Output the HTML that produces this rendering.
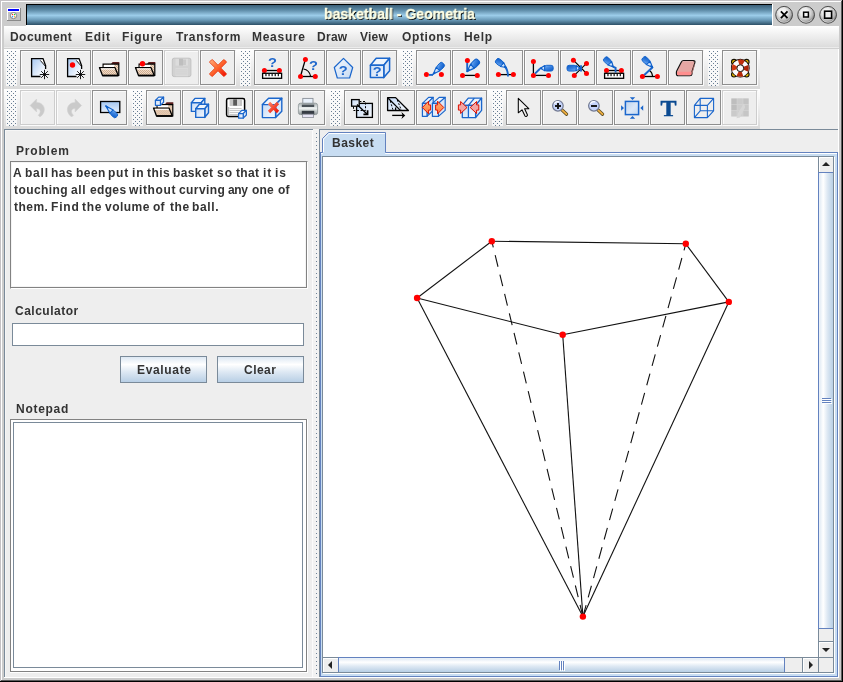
<!DOCTYPE html><html><head><meta charset="utf-8"><title>basketball - Geometria</title><style>
*{margin:0;padding:0;box-sizing:border-box}
html,body{width:843px;height:682px;overflow:hidden;background:#eeeeee}
body{position:relative;font-family:"Liberation Sans",sans-serif;font-weight:bold;font-size:12px;color:#333}
.a{position:absolute}
.t{position:absolute;margin-top:1px;will-change:transform;white-space:nowrap;line-height:15px;height:15px;color:#333}
.btn{position:absolute;width:36px;height:36px;will-change:transform}
.btn svg{position:absolute;left:0;top:0}
.grip{position:absolute;width:12px;height:36px;background:#f8f8f8}
.pbtn{position:absolute;height:27px;width:87px;border:1px solid #7a8a99;background:linear-gradient(#dde8f3 0%,#ffffff 30%,#dde8f3 60%,#b8cfe5 100%)}
</style></head><body><svg width="0" height="0" style="position:absolute"><defs><linearGradient id="gPen" x1="0" y1="0" x2="0.6" y2="1"><stop offset="0" stop-color="#7db6f6"/><stop offset="0.5" stop-color="#3a82e0"/><stop offset="1" stop-color="#1462cc"/></linearGradient><linearGradient id="gNib" x1="0" y1="0" x2="1" y2="1"><stop offset="0" stop-color="#ffffff"/><stop offset="0.5" stop-color="#d8eaff"/><stop offset="1" stop-color="#7ab2f4"/></linearGradient><linearGradient id="gLB" x1="0" y1="0" x2="1" y2="1"><stop offset="0" stop-color="#a4c6f0"/><stop offset="1" stop-color="#eef4fd"/></linearGradient><linearGradient id="gLBp" x1="0" y1="0" x2="1" y2="1"><stop offset="0" stop-color="#a6c8f2"/><stop offset="0.75" stop-color="#f2f7fe"/><stop offset="1" stop-color="#f4f4f4"/></linearGradient><linearGradient id="gLife" gradientUnits="userSpaceOnUse" x1="10" y1="10" x2="27" y2="27"><stop offset="0" stop-color="#e04016"/><stop offset="1" stop-color="#981a02"/></linearGradient><linearGradient id="gFit" x1="0" y1="0" x2="1" y2="1"><stop offset="0" stop-color="#bdd3ef"/><stop offset="0.55" stop-color="#dce8f7"/><stop offset="1" stop-color="#c2d7f2"/></linearGradient><linearGradient id="gLBc" x1="0" y1="0" x2="1" y2="1"><stop offset="0" stop-color="#c6daf5"/><stop offset="1" stop-color="#f7fafe"/></linearGradient><linearGradient id="gLB2" x1="0" y1="0" x2="1" y2="1"><stop offset="0" stop-color="#f2f7fd"/><stop offset="0.5" stop-color="#dde9f8"/><stop offset="1" stop-color="#c6daf3"/></linearGradient><linearGradient id="gLBv" x1="0" y1="0" x2="0" y2="1"><stop offset="0" stop-color="#a4c6f0"/><stop offset="1" stop-color="#e6f0fc"/></linearGradient><linearGradient id="gX" x1="0" y1="0" x2="1" y2="1"><stop offset="0" stop-color="#ffb080"/><stop offset="0.45" stop-color="#ff6a30"/><stop offset="1" stop-color="#f00800"/></linearGradient><linearGradient id="gX2" gradientUnits="userSpaceOnUse" x1="14" y1="12" x2="25" y2="23"><stop offset="0" stop-color="#ff8a6a"/><stop offset="1" stop-color="#e80a00"/></linearGradient><linearGradient id="gOr" x1="0" y1="0" x2="0" y2="1"><stop offset="0" stop-color="#ffb070"/><stop offset="1" stop-color="#ff7a40"/></linearGradient><linearGradient id="gPr" x1="0" y1="0" x2="0" y2="1"><stop offset="0" stop-color="#aab2b4"/><stop offset="0.45" stop-color="#eef2f2"/><stop offset="1" stop-color="#8e9698"/></linearGradient><pattern id="pChk" width="2" height="2" patternUnits="userSpaceOnUse"><rect width="2" height="2" fill="#f3dcc6"/><rect width="1" height="1" fill="#cfae93"/><rect x="1" y="1" width="1" height="1" fill="#cfae93"/></pattern></defs></svg>
<div class="a" style="left:0;top:0;width:843px;height:682px;background:#cccccc"></div>
<div class="a" style="left:0;top:0;width:843px;height:1px;background:#c4c1c4"></div>
<div class="a" style="left:0;top:0;width:1px;height:682px;background:#c4c1c4"></div>
<div class="a" style="left:1px;top:1px;width:841px;height:1px;background:#fff"></div>
<div class="a" style="left:1px;top:1px;width:1px;height:679px;background:#fff"></div>
<div class="a" style="left:839px;top:2px;width:2px;height:678px;background:#cbcbcb"></div>
<div class="a" style="left:2px;top:678px;width:839px;height:2px;background:#cbcbcb"></div>
<div class="a" style="left:841px;top:1px;width:1px;height:681px;background:#5c5c5c"></div>
<div class="a" style="left:1px;top:680px;width:841px;height:1px;background:#5c5c5c"></div>
<div class="a" style="left:842px;top:0;width:1px;height:682px;background:#000"></div>
<div class="a" style="left:0;top:681px;width:843px;height:1px;background:#000"></div>
<div class="a" style="left:4px;top:26px;width:835px;height:652px;background:#eeeeee"></div>
<div class="a" style="left:838px;top:26px;width:1px;height:652px;background:#fff"></div>
<div class="a" style="left:4px;top:677px;width:835px;height:1px;background:#fff"></div>
<div class="a" style="left:26px;top:4px;width:747px;height:22px;background:#fff"></div>
<div class="a" style="left:26px;top:4px;width:746px;height:21px;background:#000"></div>
<div class="a" style="left:27px;top:5px;width:745px;height:20px;background:linear-gradient(#3b5f78 0%,#5d8aa6 25%,#9ccdea 52%,#6a9ab8 75%,#2c4f66 100%)"></div>
<div class="t" id="title" style="left:324px;top:4px;font-size:15px;line-height:17px;height:17px;color:#ffffe4;text-shadow:1px 1px 0 #000;-webkit-text-stroke:0.35px #ffffe4;transform-origin:0 0;transform:scaleX(0.9384);">basketball - Geometria</div>
<svg class="a" style="left:7px;top:8px" width="14" height="13" viewBox="0 0 14 13"><rect x="0" y="0" width="14" height="13" fill="#8a8a8a"/><rect x="0" y="0" width="13" height="12" fill="#fff"/><rect x="1" y="4" width="12" height="8" fill="#c3c3c3"/><rect x="1" y="1" width="11" height="2" fill="#0000ff"/><rect x="12" y="1" width="1" height="3" fill="#fffff0"/><circle cx="6.5" cy="7.6" r="3.1" fill="#fdfdfd" stroke="#7a7a7a" stroke-width="0.9"/><rect x="5" y="6" width="1.2" height="1.2" fill="#ff3020"/><rect x="7" y="6" width="1.2" height="1.2" fill="#22cc22"/><rect x="5" y="8.1" width="1.2" height="1.2" fill="#2090ff"/><rect x="7" y="8.1" width="1.2" height="1.2" fill="#ffa020"/></svg>
<svg class="a" style="left:774px;top:5px" width="20" height="20" viewBox="0 0 20 20"><defs><radialGradient id="gx" cx="0.42" cy="0.36" r="0.62"><stop offset="0" stop-color="#ffffff"/><stop offset="0.4" stop-color="#ececec"/><stop offset="0.8" stop-color="#b4b4b4"/><stop offset="1" stop-color="#7c7c7c"/></radialGradient></defs><circle cx="10.1" cy="9.8" r="8.4" fill="url(#gx)" stroke="#4c4c4c" stroke-width="1"/><path d="M4.2 14.5 A7.6 7.6 0 0 0 16 14.5" fill="none" stroke="#e6e6e6" stroke-width="1" opacity="0.7"/><path d="M6.9 6.4 L13.5 13.2 M13.5 6.4 L6.9 13.2" stroke="#000" stroke-width="1.8" fill="none"/></svg>
<svg class="a" style="left:796px;top:5px" width="20" height="20" viewBox="0 0 20 20"><defs><radialGradient id="gm" cx="0.42" cy="0.36" r="0.62"><stop offset="0" stop-color="#ffffff"/><stop offset="0.4" stop-color="#ececec"/><stop offset="0.8" stop-color="#b4b4b4"/><stop offset="1" stop-color="#7c7c7c"/></radialGradient></defs><circle cx="10.1" cy="9.8" r="8.4" fill="url(#gm)" stroke="#4c4c4c" stroke-width="1"/><path d="M4.2 14.5 A7.6 7.6 0 0 0 16 14.5" fill="none" stroke="#e6e6e6" stroke-width="1" opacity="0.7"/><rect x="7.6" y="7.2" width="4.8" height="4.8" fill="#f4f4f4" stroke="#000" stroke-width="1.5"/></svg>
<svg class="a" style="left:818px;top:5px" width="20" height="20" viewBox="0 0 20 20"><defs><radialGradient id="gM" cx="0.42" cy="0.36" r="0.62"><stop offset="0" stop-color="#ffffff"/><stop offset="0.4" stop-color="#ececec"/><stop offset="0.8" stop-color="#b4b4b4"/><stop offset="1" stop-color="#7c7c7c"/></radialGradient></defs><circle cx="10.1" cy="9.8" r="8.4" fill="url(#gM)" stroke="#4c4c4c" stroke-width="1"/><path d="M4.2 14.5 A7.6 7.6 0 0 0 16 14.5" fill="none" stroke="#e6e6e6" stroke-width="1" opacity="0.7"/><rect x="6.6" y="6.2" width="7" height="7" fill="#ececec" stroke="#000" stroke-width="1.6"/></svg>
<div class="a" style="left:4px;top:26px;width:835px;height:21px;background:linear-gradient(#ffffff,#dcdcdc)"></div>
<div class="a" style="left:4px;top:47px;width:835px;height:1px;background:#ebebeb"></div>
<div class="a" style="left:4px;top:48px;width:835px;height:1px;background:#d0d0d0"></div>
<div class="t" style="left:9.80px;top:29px;letter-spacing:0.454px;">Document</div>
<div class="t" style="left:84.80px;top:29px;letter-spacing:0.759px;">Edit</div>
<div class="t" style="left:121.90px;top:29px;letter-spacing:0.768px;">Figure</div>
<div class="t" style="left:176.27px;top:29px;letter-spacing:0.724px;">Transform</div>
<div class="t" style="left:251.60px;top:29px;letter-spacing:0.718px;">Measure</div>
<div class="t" style="left:316.80px;top:29px;letter-spacing:0.279px;">Draw</div>
<div class="t" style="left:360.12px;top:29px;letter-spacing:0.239px;">View</div>
<div class="t" style="left:401.81px;top:29px;letter-spacing:0.609px;">Options</div>
<div class="t" style="left:463.80px;top:29px;letter-spacing:0.660px;">Help</div>
<div class="a" style="left:4px;top:49px;width:756px;height:40px;background:linear-gradient(#ffffff,#dadada)"></div>
<div class="a" style="left:4px;top:89px;width:756px;height:40px;background:linear-gradient(#ffffff,#dadada)"></div>
<svg class="a" style="left:6px;top:51px" width="11" height="35" viewBox="0 0 11 35"><rect width="11" height="35" fill="#fafafa" opacity="0.85"/><rect x="1" y="0" width="1" height="1" fill="#687d93"/><rect x="5" y="0" width="1" height="1" fill="#687d93"/><rect x="9" y="0" width="1" height="1" fill="#687d93"/><rect x="3" y="2" width="1" height="1" fill="#687d93"/><rect x="7" y="2" width="1" height="1" fill="#687d93"/><rect x="1" y="4" width="1" height="1" fill="#687d93"/><rect x="5" y="4" width="1" height="1" fill="#687d93"/><rect x="9" y="4" width="1" height="1" fill="#687d93"/><rect x="3" y="6" width="1" height="1" fill="#687d93"/><rect x="7" y="6" width="1" height="1" fill="#687d93"/><rect x="1" y="8" width="1" height="1" fill="#687d93"/><rect x="5" y="8" width="1" height="1" fill="#687d93"/><rect x="9" y="8" width="1" height="1" fill="#687d93"/><rect x="3" y="10" width="1" height="1" fill="#687d93"/><rect x="7" y="10" width="1" height="1" fill="#687d93"/><rect x="1" y="12" width="1" height="1" fill="#687d93"/><rect x="5" y="12" width="1" height="1" fill="#687d93"/><rect x="9" y="12" width="1" height="1" fill="#687d93"/><rect x="3" y="14" width="1" height="1" fill="#687d93"/><rect x="7" y="14" width="1" height="1" fill="#687d93"/><rect x="1" y="16" width="1" height="1" fill="#687d93"/><rect x="5" y="16" width="1" height="1" fill="#687d93"/><rect x="9" y="16" width="1" height="1" fill="#687d93"/><rect x="3" y="18" width="1" height="1" fill="#687d93"/><rect x="7" y="18" width="1" height="1" fill="#687d93"/><rect x="1" y="20" width="1" height="1" fill="#687d93"/><rect x="5" y="20" width="1" height="1" fill="#687d93"/><rect x="9" y="20" width="1" height="1" fill="#687d93"/><rect x="3" y="22" width="1" height="1" fill="#687d93"/><rect x="7" y="22" width="1" height="1" fill="#687d93"/><rect x="1" y="24" width="1" height="1" fill="#687d93"/><rect x="5" y="24" width="1" height="1" fill="#687d93"/><rect x="9" y="24" width="1" height="1" fill="#687d93"/><rect x="3" y="26" width="1" height="1" fill="#687d93"/><rect x="7" y="26" width="1" height="1" fill="#687d93"/><rect x="1" y="28" width="1" height="1" fill="#687d93"/><rect x="5" y="28" width="1" height="1" fill="#687d93"/><rect x="9" y="28" width="1" height="1" fill="#687d93"/><rect x="3" y="30" width="1" height="1" fill="#687d93"/><rect x="7" y="30" width="1" height="1" fill="#687d93"/><rect x="1" y="32" width="1" height="1" fill="#687d93"/><rect x="5" y="32" width="1" height="1" fill="#687d93"/><rect x="9" y="32" width="1" height="1" fill="#687d93"/><rect x="3" y="34" width="1" height="1" fill="#687d93"/><rect x="7" y="34" width="1" height="1" fill="#687d93"/></svg>
<div class="btn" style="left:20px;top:50px"><svg width="36" height="36" viewBox="0 0 36 36"><rect x="0" y="0" width="36" height="36" fill="#eeeeee"/><path d="M1.5 34 V1.5 H34 M35.5 1 V35.5 H1" fill="none" stroke="#fbfbfb" stroke-width="1"/><rect x="0.5" y="0.5" width="34" height="34" fill="none" stroke="#8e8e8e" stroke-width="1"/><path d="M11.6 8.6 L23 8.6 L25.6 15.5 L25.6 26.4 L11.6 26.4 Z" fill="url(#gLBp)"/><path d="M20.2 10.2 L23 8.6 L25.6 15.5 L25 16.3 Z" fill="#fff"/><path d="M20.5 26.5 L11.6 26.5 L11.6 8.6 L23 8.6 L25.6 15.5 L25.6 19" fill="none" stroke="#000" stroke-width="1.3"/><path d="M20.3 10.4 L25.2 16" fill="none" stroke="#000" stroke-width="0.9"/><rect x="17.5" y="19.5" width="11" height="10" fill="#eeeeee" opacity="0.0"/><path d="M24.5 19.8 L24.5 29.2 M19.8 24.5 L29.2 24.5 M21.2 21.2 L27.8 27.8 M27.8 21.2 L21.2 27.8" stroke="#000" stroke-width="0.9" fill="none"/></svg></div>
<div class="btn" style="left:56px;top:50px"><svg width="36" height="36" viewBox="0 0 36 36"><rect x="0" y="0" width="36" height="36" fill="#eeeeee"/><path d="M1.5 34 V1.5 H34 M35.5 1 V35.5 H1" fill="none" stroke="#fbfbfb" stroke-width="1"/><rect x="0.5" y="0.5" width="34" height="34" fill="none" stroke="#8e8e8e" stroke-width="1"/><path d="M11.6 8.6 L23 8.6 L25.6 15.5 L25.6 26.4 L11.6 26.4 Z" fill="url(#gLBp)"/><path d="M20.2 10.2 L23 8.6 L25.6 15.5 L25 16.3 Z" fill="#fff"/><path d="M20.5 26.5 L11.6 26.5 L11.6 8.6 L23 8.6 L25.6 15.5 L25.6 19" fill="none" stroke="#000" stroke-width="1.3"/><path d="M20.3 10.4 L25.2 16" fill="none" stroke="#000" stroke-width="0.9"/><rect x="17.5" y="19.5" width="11" height="10" fill="#eeeeee" opacity="0.0"/><path d="M24.5 19.8 L24.5 29.2 M19.8 24.5 L29.2 24.5 M21.2 21.2 L27.8 27.8 M27.8 21.2 L21.2 27.8" stroke="#000" stroke-width="0.9" fill="none"/><circle cx="16.50" cy="15.00" r="2.70" fill="#ff0000"/></svg></div>
<div class="btn" style="left:92px;top:50px"><svg width="36" height="36" viewBox="0 0 36 36"><rect x="0" y="0" width="36" height="36" fill="#eeeeee"/><path d="M1.5 34 V1.5 H34 M35.5 1 V35.5 H1" fill="none" stroke="#fbfbfb" stroke-width="1"/><rect x="0.5" y="0.5" width="34" height="34" fill="none" stroke="#8e8e8e" stroke-width="1"/><g transform="translate(0 0.0)"><path d="M19 13.9 L20.6 11.9 L27.3 11.9 L27.3 13.9 Z" fill="#5c1f1f"/><path d="M11.1 14.2 L26.8 14.2 L26.8 25.5 L11.1 25.5 Z" fill="url(#pChk)" stroke="#000" stroke-width="1.2"/><rect x="11.8" y="14.9" width="10.4" height="2.3" fill="#fff"/><path d="M7.5 17.7 L23 17.7 L26.3 25.5 L10.5 25.5 Z" fill="url(#pChk)" stroke="#000" stroke-width="1.3" stroke-linejoin="round"/><path d="M10.4 25.6 L26.4 25.6" stroke="#000" stroke-width="1.5"/><path d="M8.9 18.9 L22.6 18.9" stroke="#fff" stroke-width="1.1"/></g></svg></div>
<div class="btn" style="left:128px;top:50px"><svg width="36" height="36" viewBox="0 0 36 36"><rect x="0" y="0" width="36" height="36" fill="#eeeeee"/><path d="M1.5 34 V1.5 H34 M35.5 1 V35.5 H1" fill="none" stroke="#fbfbfb" stroke-width="1"/><rect x="0.5" y="0.5" width="34" height="34" fill="none" stroke="#8e8e8e" stroke-width="1"/><g transform="translate(0 0.0)"><path d="M19 13.9 L20.6 11.9 L27.3 11.9 L27.3 13.9 Z" fill="#5c1f1f"/><path d="M11.1 14.2 L26.8 14.2 L26.8 25.5 L11.1 25.5 Z" fill="url(#pChk)" stroke="#000" stroke-width="1.2"/><rect x="11.8" y="14.9" width="10.4" height="2.3" fill="#fff"/><path d="M7.5 17.7 L23 17.7 L26.3 25.5 L10.5 25.5 Z" fill="url(#pChk)" stroke="#000" stroke-width="1.3" stroke-linejoin="round"/><path d="M10.4 25.6 L26.4 25.6" stroke="#000" stroke-width="1.5"/><path d="M8.9 18.9 L22.6 18.9" stroke="#fff" stroke-width="1.1"/></g><circle cx="14.50" cy="13.80" r="2.70" fill="#ff0000"/></svg></div>
<div class="btn" style="left:164px;top:50px"><svg width="36" height="36" viewBox="0 0 36 36"><rect x="0" y="0" width="36" height="36" fill="#eeeeee"/><path d="M1.5 34 V1.5 H34 M35.5 1 V35.5 H1" fill="none" stroke="#fbfbfb" stroke-width="1"/><rect x="0.5" y="0.5" width="34" height="34" fill="none" stroke="#cdcdcd" stroke-width="1"/><rect x="8.3" y="8.2" width="18.6" height="18.4" rx="1.8" fill="#d2d2d2" stroke="#c2c2c2" stroke-width="1"/><rect x="11.5" y="8.8" width="12.5" height="6.8" fill="#dcdcdc"/><rect x="15" y="8.8" width="4" height="6.8" fill="#bebebe"/><rect x="19" y="9.5" width="3" height="5.5" fill="#cacaca"/><rect x="11.5" y="18" width="12.5" height="8.3" fill="#dadada"/><path d="M12 20 H23.5 M12 22 H23.5 M12 24 H23.5" stroke="#cfcfcf" stroke-width="0.8"/></svg></div>
<div class="btn" style="left:200px;top:50px"><svg width="36" height="36" viewBox="0 0 36 36"><rect x="0" y="0" width="36" height="36" fill="#eeeeee"/><path d="M1.5 34 V1.5 H34 M35.5 1 V35.5 H1" fill="none" stroke="#fbfbfb" stroke-width="1"/><rect x="0.5" y="0.5" width="34" height="34" fill="none" stroke="#8e8e8e" stroke-width="1"/><path d="M9.8 11.6 L11.6 9.8 Q12.1 9.3 12.6 9.8 L18 15.2 L23.4 9.8 Q23.9 9.3 24.4 9.8 L26.2 11.6 Q26.7 12.1 26.2 12.6 L20.8 18 L26.2 23.4 Q26.7 23.9 26.2 24.4 L24.4 26.2 Q23.9 26.7 23.4 26.2 L18 20.8 L12.6 26.2 Q12.1 26.7 11.6 26.2 L9.8 24.4 Q9.3 23.9 9.8 23.4 L15.2 18 L9.8 12.6 Q9.3 12.1 9.8 11.6 Z" fill="url(#gX)" stroke="#e23a10" stroke-width="0.8"/></svg></div>
<svg class="a" style="left:240px;top:51px" width="11" height="35" viewBox="0 0 11 35"><rect width="11" height="35" fill="#fafafa" opacity="0.85"/><rect x="1" y="0" width="1" height="1" fill="#687d93"/><rect x="5" y="0" width="1" height="1" fill="#687d93"/><rect x="9" y="0" width="1" height="1" fill="#687d93"/><rect x="3" y="2" width="1" height="1" fill="#687d93"/><rect x="7" y="2" width="1" height="1" fill="#687d93"/><rect x="1" y="4" width="1" height="1" fill="#687d93"/><rect x="5" y="4" width="1" height="1" fill="#687d93"/><rect x="9" y="4" width="1" height="1" fill="#687d93"/><rect x="3" y="6" width="1" height="1" fill="#687d93"/><rect x="7" y="6" width="1" height="1" fill="#687d93"/><rect x="1" y="8" width="1" height="1" fill="#687d93"/><rect x="5" y="8" width="1" height="1" fill="#687d93"/><rect x="9" y="8" width="1" height="1" fill="#687d93"/><rect x="3" y="10" width="1" height="1" fill="#687d93"/><rect x="7" y="10" width="1" height="1" fill="#687d93"/><rect x="1" y="12" width="1" height="1" fill="#687d93"/><rect x="5" y="12" width="1" height="1" fill="#687d93"/><rect x="9" y="12" width="1" height="1" fill="#687d93"/><rect x="3" y="14" width="1" height="1" fill="#687d93"/><rect x="7" y="14" width="1" height="1" fill="#687d93"/><rect x="1" y="16" width="1" height="1" fill="#687d93"/><rect x="5" y="16" width="1" height="1" fill="#687d93"/><rect x="9" y="16" width="1" height="1" fill="#687d93"/><rect x="3" y="18" width="1" height="1" fill="#687d93"/><rect x="7" y="18" width="1" height="1" fill="#687d93"/><rect x="1" y="20" width="1" height="1" fill="#687d93"/><rect x="5" y="20" width="1" height="1" fill="#687d93"/><rect x="9" y="20" width="1" height="1" fill="#687d93"/><rect x="3" y="22" width="1" height="1" fill="#687d93"/><rect x="7" y="22" width="1" height="1" fill="#687d93"/><rect x="1" y="24" width="1" height="1" fill="#687d93"/><rect x="5" y="24" width="1" height="1" fill="#687d93"/><rect x="9" y="24" width="1" height="1" fill="#687d93"/><rect x="3" y="26" width="1" height="1" fill="#687d93"/><rect x="7" y="26" width="1" height="1" fill="#687d93"/><rect x="1" y="28" width="1" height="1" fill="#687d93"/><rect x="5" y="28" width="1" height="1" fill="#687d93"/><rect x="9" y="28" width="1" height="1" fill="#687d93"/><rect x="3" y="30" width="1" height="1" fill="#687d93"/><rect x="7" y="30" width="1" height="1" fill="#687d93"/><rect x="1" y="32" width="1" height="1" fill="#687d93"/><rect x="5" y="32" width="1" height="1" fill="#687d93"/><rect x="9" y="32" width="1" height="1" fill="#687d93"/><rect x="3" y="34" width="1" height="1" fill="#687d93"/><rect x="7" y="34" width="1" height="1" fill="#687d93"/></svg>
<div class="btn" style="left:254px;top:50px"><svg width="36" height="36" viewBox="0 0 36 36"><rect x="0" y="0" width="36" height="36" fill="#eeeeee"/><path d="M1.5 34 V1.5 H34 M35.5 1 V35.5 H1" fill="none" stroke="#fbfbfb" stroke-width="1"/><rect x="0.5" y="0.5" width="34" height="34" fill="none" stroke="#8e8e8e" stroke-width="1"/><text transform="translate(18.40 16.80) scale(1.22 1)" x="0" y="0" text-anchor="middle" font-family="Liberation Sans" font-weight="bold" font-size="12.0" fill="#2068cc">?</text><path d="M10.40 20.50 L25.40 20.50" stroke="#000" stroke-width="1.30" fill="none" /><circle cx="10.40" cy="20.50" r="2.50" fill="#ff0000"/><circle cx="25.40" cy="20.50" r="2.50" fill="#ff0000"/><rect x="8.6" y="23.3" width="19" height="5" fill="#fff" stroke="#000" stroke-width="1.3"/><rect x="11.3" y="23.8" width="1.3" height="2.4" fill="#222"/><rect x="14.4" y="23.8" width="1.3" height="2.4" fill="#222"/><rect x="17.5" y="23.8" width="1.3" height="2.4" fill="#222"/><rect x="20.6" y="23.8" width="1.3" height="2.4" fill="#222"/><rect x="23.7" y="23.8" width="1.3" height="2.4" fill="#222"/></svg></div>
<div class="btn" style="left:290px;top:50px"><svg width="36" height="36" viewBox="0 0 36 36"><rect x="0" y="0" width="36" height="36" fill="#eeeeee"/><path d="M1.5 34 V1.5 H34 M35.5 1 V35.5 H1" fill="none" stroke="#fbfbfb" stroke-width="1"/><rect x="0.5" y="0.5" width="34" height="34" fill="none" stroke="#8e8e8e" stroke-width="1"/><path d="M15.40 9.40 L12.30 20.00" stroke="#000" stroke-width="1.30" fill="none" /><path d="M12.30 20.00 L10.50 26.50" stroke="#000" stroke-width="1.30" fill="none" /><path d="M10.50 26.50 L25.30 26.50" stroke="#000" stroke-width="1.30" fill="none" /><path d="M13.5 19 C17 19.5 19.8 22.5 20.6 26.3" fill="none" stroke="#000" stroke-width="1.2"/><circle cx="15.40" cy="9.40" r="2.50" fill="#ff0000"/><circle cx="10.50" cy="26.50" r="2.50" fill="#ff0000"/><circle cx="25.30" cy="26.50" r="2.50" fill="#ff0000"/><text transform="translate(23.40 19.80) scale(1.22 1)" x="0" y="0" text-anchor="middle" font-family="Liberation Sans" font-weight="bold" font-size="12.0" fill="#2068cc">?</text></svg></div>
<div class="btn" style="left:326px;top:50px"><svg width="36" height="36" viewBox="0 0 36 36"><rect x="0" y="0" width="36" height="36" fill="#eeeeee"/><path d="M1.5 34 V1.5 H34 M35.5 1 V35.5 H1" fill="none" stroke="#fbfbfb" stroke-width="1"/><rect x="0.5" y="0.5" width="34" height="34" fill="none" stroke="#8e8e8e" stroke-width="1"/><path d="M17.5 8.3 L26.7 17.5 L23.6 28 L11.3 28 L8.3 17.5 Z" fill="url(#gLB2)" stroke="#1a66cc" stroke-width="1.2" stroke-linejoin="round"/><text transform="translate(17.30 25.30) scale(1.22 1)" x="0" y="0" text-anchor="middle" font-family="Liberation Sans" font-weight="bold" font-size="12.0" fill="#2068cc">?</text></svg></div>
<div class="btn" style="left:362px;top:50px"><svg width="36" height="36" viewBox="0 0 36 36"><rect x="0" y="0" width="36" height="36" fill="#eeeeee"/><path d="M1.5 34 V1.5 H34 M35.5 1 V35.5 H1" fill="none" stroke="#fbfbfb" stroke-width="1"/><rect x="0.5" y="0.5" width="34" height="34" fill="none" stroke="#8e8e8e" stroke-width="1"/><path d="M8.40 15.20 L14.20 8.30 L27.60 8.30 L21.80 15.20 Z" fill="#eef4fc" stroke="#1a66cc" stroke-width="1.50" stroke-linejoin="round"/><path d="M21.80 15.20 L27.60 8.30 L27.60 20.70 L21.80 27.60 Z" fill="#dbe7f8" stroke="#1a66cc" stroke-width="1.50" stroke-linejoin="round"/><rect x="8.40" y="15.20" width="13.40" height="12.40" fill="url(#gLBc)" stroke="#1a66cc" stroke-width="1.50" stroke-linejoin="round"/><text transform="translate(15.20 25.70) scale(1.22 1)" x="0" y="0" text-anchor="middle" font-family="Liberation Sans" font-weight="bold" font-size="12.0" fill="#2068cc">?</text></svg></div>
<svg class="a" style="left:402px;top:51px" width="11" height="35" viewBox="0 0 11 35"><rect width="11" height="35" fill="#fafafa" opacity="0.85"/><rect x="1" y="0" width="1" height="1" fill="#687d93"/><rect x="5" y="0" width="1" height="1" fill="#687d93"/><rect x="9" y="0" width="1" height="1" fill="#687d93"/><rect x="3" y="2" width="1" height="1" fill="#687d93"/><rect x="7" y="2" width="1" height="1" fill="#687d93"/><rect x="1" y="4" width="1" height="1" fill="#687d93"/><rect x="5" y="4" width="1" height="1" fill="#687d93"/><rect x="9" y="4" width="1" height="1" fill="#687d93"/><rect x="3" y="6" width="1" height="1" fill="#687d93"/><rect x="7" y="6" width="1" height="1" fill="#687d93"/><rect x="1" y="8" width="1" height="1" fill="#687d93"/><rect x="5" y="8" width="1" height="1" fill="#687d93"/><rect x="9" y="8" width="1" height="1" fill="#687d93"/><rect x="3" y="10" width="1" height="1" fill="#687d93"/><rect x="7" y="10" width="1" height="1" fill="#687d93"/><rect x="1" y="12" width="1" height="1" fill="#687d93"/><rect x="5" y="12" width="1" height="1" fill="#687d93"/><rect x="9" y="12" width="1" height="1" fill="#687d93"/><rect x="3" y="14" width="1" height="1" fill="#687d93"/><rect x="7" y="14" width="1" height="1" fill="#687d93"/><rect x="1" y="16" width="1" height="1" fill="#687d93"/><rect x="5" y="16" width="1" height="1" fill="#687d93"/><rect x="9" y="16" width="1" height="1" fill="#687d93"/><rect x="3" y="18" width="1" height="1" fill="#687d93"/><rect x="7" y="18" width="1" height="1" fill="#687d93"/><rect x="1" y="20" width="1" height="1" fill="#687d93"/><rect x="5" y="20" width="1" height="1" fill="#687d93"/><rect x="9" y="20" width="1" height="1" fill="#687d93"/><rect x="3" y="22" width="1" height="1" fill="#687d93"/><rect x="7" y="22" width="1" height="1" fill="#687d93"/><rect x="1" y="24" width="1" height="1" fill="#687d93"/><rect x="5" y="24" width="1" height="1" fill="#687d93"/><rect x="9" y="24" width="1" height="1" fill="#687d93"/><rect x="3" y="26" width="1" height="1" fill="#687d93"/><rect x="7" y="26" width="1" height="1" fill="#687d93"/><rect x="1" y="28" width="1" height="1" fill="#687d93"/><rect x="5" y="28" width="1" height="1" fill="#687d93"/><rect x="9" y="28" width="1" height="1" fill="#687d93"/><rect x="3" y="30" width="1" height="1" fill="#687d93"/><rect x="7" y="30" width="1" height="1" fill="#687d93"/><rect x="1" y="32" width="1" height="1" fill="#687d93"/><rect x="5" y="32" width="1" height="1" fill="#687d93"/><rect x="9" y="32" width="1" height="1" fill="#687d93"/><rect x="3" y="34" width="1" height="1" fill="#687d93"/><rect x="7" y="34" width="1" height="1" fill="#687d93"/></svg>
<div class="btn" style="left:416px;top:50px"><svg width="36" height="36" viewBox="0 0 36 36"><rect x="0" y="0" width="36" height="36" fill="#eeeeee"/><path d="M1.5 34 V1.5 H34 M35.5 1 V35.5 H1" fill="none" stroke="#fbfbfb" stroke-width="1"/><rect x="0.5" y="0.5" width="34" height="34" fill="none" stroke="#8e8e8e" stroke-width="1"/><circle cx="10.40" cy="24.60" r="2.50" fill="#ff0000"/><circle cx="25.40" cy="24.60" r="2.50" fill="#ff0000"/><path d="M13.00 24.90 L17.00 24.90" stroke="#1a66cc" stroke-width="1.90" fill="none" /><g transform="translate(17.30 24.00) rotate(-46.4) scale(1.00)"><path d="M0 0 L7.00 -2.60 L7.00 2.60 Z" fill="url(#gNib)" stroke="#0d5fca" stroke-width="1.1" stroke-linejoin="round"/><path d="M0 0 L2.31 0" stroke="#0d5fca" stroke-width="1.6" stroke-linecap="round"/><rect x="6.80" y="-2.80" width="7.70" height="5.60" rx="2.1" fill="url(#gPen)" stroke="#0d5fca" stroke-width="0.9"/></g></svg></div>
<div class="btn" style="left:452px;top:50px"><svg width="36" height="36" viewBox="0 0 36 36"><rect x="0" y="0" width="36" height="36" fill="#eeeeee"/><path d="M1.5 34 V1.5 H34 M35.5 1 V35.5 H1" fill="none" stroke="#fbfbfb" stroke-width="1"/><rect x="0.5" y="0.5" width="34" height="34" fill="none" stroke="#8e8e8e" stroke-width="1"/><path d="M10.50 25.40 L25.30 25.40" stroke="#000" stroke-width="1.30" fill="none" /><circle cx="10.50" cy="25.40" r="2.50" fill="#ff0000"/><circle cx="25.30" cy="25.40" r="2.50" fill="#ff0000"/><path d="M15.20 12.00 L15.20 21.50" stroke="#1a66cc" stroke-width="1.90" fill="none" /><circle cx="15.40" cy="10.40" r="2.50" fill="#ff0000"/><g transform="translate(15.20 21.40) rotate(-44.5) scale(1.08)"><path d="M0 0 L7.00 -2.60 L7.00 2.60 Z" fill="url(#gNib)" stroke="#0d5fca" stroke-width="1.1" stroke-linejoin="round"/><path d="M0 0 L2.31 0" stroke="#0d5fca" stroke-width="1.6" stroke-linecap="round"/><rect x="6.80" y="-2.80" width="7.70" height="5.60" rx="2.1" fill="url(#gPen)" stroke="#0d5fca" stroke-width="0.9"/></g></svg></div>
<div class="btn" style="left:488px;top:50px"><svg width="36" height="36" viewBox="0 0 36 36"><rect x="0" y="0" width="36" height="36" fill="#eeeeee"/><path d="M1.5 34 V1.5 H34 M35.5 1 V35.5 H1" fill="none" stroke="#fbfbfb" stroke-width="1"/><rect x="0.5" y="0.5" width="34" height="34" fill="none" stroke="#8e8e8e" stroke-width="1"/><path d="M10.40 24.60 L25.40 24.60" stroke="#000" stroke-width="1.30" fill="none" /><circle cx="10.40" cy="24.60" r="2.50" fill="#ff0000"/><circle cx="25.40" cy="24.60" r="2.50" fill="#ff0000"/><path d="M16.5 16.3 C18.8 18.5 20 22 20 26.6" fill="none" stroke="#1a66cc" stroke-width="1.9"/><g transform="translate(18.00 17.50) rotate(-141.9) scale(1.00)"><path d="M0 0 L5.00 -2.60 L5.00 2.60 Z" fill="url(#gNib)" stroke="#0d5fca" stroke-width="1.1" stroke-linejoin="round"/><path d="M0 0 L1.65 0" stroke="#0d5fca" stroke-width="1.6" stroke-linecap="round"/><rect x="4.80" y="-2.80" width="7.60" height="5.60" rx="2.1" fill="url(#gPen)" stroke="#0d5fca" stroke-width="0.9"/></g></svg></div>
<div class="btn" style="left:524px;top:50px"><svg width="36" height="36" viewBox="0 0 36 36"><rect x="0" y="0" width="36" height="36" fill="#eeeeee"/><path d="M1.5 34 V1.5 H34 M35.5 1 V35.5 H1" fill="none" stroke="#fbfbfb" stroke-width="1"/><rect x="0.5" y="0.5" width="34" height="34" fill="none" stroke="#8e8e8e" stroke-width="1"/><path d="M9.40 11.40 L9.40 25.40" stroke="#000" stroke-width="1.30" fill="none" /><path d="M9.40 25.40 L24.50 25.40" stroke="#000" stroke-width="1.30" fill="none" /><path d="M11.00 23.60 L16.00 18.80" stroke="#1a66cc" stroke-width="1.90" fill="none" /><circle cx="9.40" cy="11.40" r="2.50" fill="#ff0000"/><circle cx="9.40" cy="25.40" r="2.50" fill="#ff0000"/><circle cx="24.50" cy="25.40" r="2.50" fill="#ff0000"/><g transform="translate(16.30 18.20) rotate(0.0) scale(1.00)"><path d="M0 0 L4.50 -2.70 L4.50 2.70 Z" fill="url(#gNib)" stroke="#0d5fca" stroke-width="1.1" stroke-linejoin="round"/><path d="M0 0 L1.49 0" stroke="#0d5fca" stroke-width="1.6" stroke-linecap="round"/><rect x="4.30" y="-2.90" width="8.60" height="5.80" rx="2.1" fill="url(#gPen)" stroke="#0d5fca" stroke-width="0.9"/></g></svg></div>
<div class="btn" style="left:560px;top:50px"><svg width="36" height="36" viewBox="0 0 36 36"><rect x="0" y="0" width="36" height="36" fill="#eeeeee"/><path d="M1.5 34 V1.5 H34 M35.5 1 V35.5 H1" fill="none" stroke="#fbfbfb" stroke-width="1"/><rect x="0.5" y="0.5" width="34" height="34" fill="none" stroke="#8e8e8e" stroke-width="1"/><path d="M13.40 10.20 L26.50 23.50" stroke="#000" stroke-width="1.10" fill="none" /><path d="M26.50 13.40 L14.30 25.40" stroke="#000" stroke-width="1.10" fill="none" /><path d="M21.00 15.30 L21.00 21.60" stroke="#1a66cc" stroke-width="1.90" fill="none" /><circle cx="13.40" cy="10.20" r="2.50" fill="#ff0000"/><circle cx="26.50" cy="13.40" r="2.50" fill="#ff0000"/><circle cx="14.30" cy="25.40" r="2.50" fill="#ff0000"/><circle cx="26.50" cy="23.50" r="2.50" fill="#ff0000"/><g transform="translate(20.50 18.20) rotate(180.0) scale(1.00)"><path d="M0 0 L4.50 -2.70 L4.50 2.70 Z" fill="url(#gNib)" stroke="#0d5fca" stroke-width="1.1" stroke-linejoin="round"/><path d="M0 0 L1.49 0" stroke="#0d5fca" stroke-width="1.6" stroke-linecap="round"/><rect x="4.30" y="-2.90" width="9.20" height="5.80" rx="2.1" fill="url(#gPen)" stroke="#0d5fca" stroke-width="0.9"/></g></svg></div>
<div class="btn" style="left:596px;top:50px"><svg width="36" height="36" viewBox="0 0 36 36"><rect x="0" y="0" width="36" height="36" fill="#eeeeee"/><path d="M1.5 34 V1.5 H34 M35.5 1 V35.5 H1" fill="none" stroke="#fbfbfb" stroke-width="1"/><rect x="0.5" y="0.5" width="34" height="34" fill="none" stroke="#8e8e8e" stroke-width="1"/><path d="M10.50 20.50 L25.40 20.50" stroke="#000" stroke-width="1.30" fill="none" /><circle cx="10.50" cy="20.50" r="2.50" fill="#ff0000"/><circle cx="25.40" cy="20.50" r="2.50" fill="#ff0000"/><path d="M17.5 16.8 L19.6 17.8 L19.6 22.5" fill="none" stroke="#1a66cc" stroke-width="1.9"/><g transform="translate(17.40 17.00) rotate(-134.0) scale(1.00)"><path d="M0 0 L5.20 -2.60 L5.20 2.60 Z" fill="url(#gNib)" stroke="#0d5fca" stroke-width="1.1" stroke-linejoin="round"/><path d="M0 0 L1.72 0" stroke="#0d5fca" stroke-width="1.6" stroke-linecap="round"/><rect x="5.00" y="-2.80" width="7.60" height="5.60" rx="2.1" fill="url(#gPen)" stroke="#0d5fca" stroke-width="0.9"/></g><rect x="8.6" y="23.3" width="19" height="5" fill="#fff" stroke="#000" stroke-width="1.3"/><rect x="11.3" y="23.8" width="1.3" height="2.4" fill="#222"/><rect x="14.4" y="23.8" width="1.3" height="2.4" fill="#222"/><rect x="17.5" y="23.8" width="1.3" height="2.4" fill="#222"/><rect x="20.6" y="23.8" width="1.3" height="2.4" fill="#222"/><rect x="23.7" y="23.8" width="1.3" height="2.4" fill="#222"/></svg></div>
<div class="btn" style="left:632px;top:50px"><svg width="36" height="36" viewBox="0 0 36 36"><rect x="0" y="0" width="36" height="36" fill="#eeeeee"/><path d="M1.5 34 V1.5 H34 M35.5 1 V35.5 H1" fill="none" stroke="#fbfbfb" stroke-width="1"/><rect x="0.5" y="0.5" width="34" height="34" fill="none" stroke="#8e8e8e" stroke-width="1"/><path d="M10.40 26.50 L25.40 26.50" stroke="#000" stroke-width="1.30" fill="none" /><path d="M17.4 20.6 C19 21.5 20.3 24 20.6 26.3" fill="none" stroke="#000" stroke-width="1.1"/><path d="M12.00 25.20 L20.30 17.40" stroke="#1a66cc" stroke-width="2.00" fill="none" /><circle cx="10.40" cy="26.50" r="2.50" fill="#ff0000"/><circle cx="25.40" cy="26.50" r="2.50" fill="#ff0000"/><g transform="translate(20.60 17.50) rotate(-133.8) scale(1.00)"><path d="M0 0 L6.50 -2.60 L6.50 2.60 Z" fill="url(#gNib)" stroke="#0d5fca" stroke-width="1.1" stroke-linejoin="round"/><path d="M0 0 L2.15 0" stroke="#0d5fca" stroke-width="1.6" stroke-linecap="round"/><rect x="6.30" y="-2.80" width="7.40" height="5.60" rx="2.1" fill="url(#gPen)" stroke="#0d5fca" stroke-width="0.9"/></g></svg></div>
<div class="btn" style="left:668px;top:50px"><svg width="36" height="36" viewBox="0 0 36 36"><rect x="0" y="0" width="36" height="36" fill="#eeeeee"/><path d="M1.5 34 V1.5 H34 M35.5 1 V35.5 H1" fill="none" stroke="#fbfbfb" stroke-width="1"/><rect x="0.5" y="0.5" width="34" height="34" fill="none" stroke="#8e8e8e" stroke-width="1"/><path d="M15.6 10.6 L25.2 10.6 Q27.6 10.6 26.8 12.9 L24.2 21 Q24 21.6 24 22.4 L24 24 Q23.8 25.7 22 25.7 L10.4 25.7 Q8.3 25.7 8.4 23.8 L8.4 22.4 Q8.4 21.6 8.8 20.8 L13.2 12.2 Q14 10.6 15.6 10.6 Z" fill="#e5a7a3" stroke="#111" stroke-width="1.15" stroke-linejoin="round"/><path d="M9 21.8 L23.5 21.8 L23.5 24 Q23.4 25.2 22 25.2 L10.4 25.2 Q9 25.2 9 23.8 Z" fill="#ff8e8e"/><path d="M24.1 21.2 L26.6 13.2 Q26.9 14.8 26.3 17 L24.1 24.4 Z" fill="#b97872"/><path d="M14.6 11.5 L25 11.5" stroke="#efc0bc" stroke-width="0.8"/></svg></div>
<svg class="a" style="left:708px;top:51px" width="11" height="35" viewBox="0 0 11 35"><rect width="11" height="35" fill="#fafafa" opacity="0.85"/><rect x="1" y="0" width="1" height="1" fill="#687d93"/><rect x="5" y="0" width="1" height="1" fill="#687d93"/><rect x="9" y="0" width="1" height="1" fill="#687d93"/><rect x="3" y="2" width="1" height="1" fill="#687d93"/><rect x="7" y="2" width="1" height="1" fill="#687d93"/><rect x="1" y="4" width="1" height="1" fill="#687d93"/><rect x="5" y="4" width="1" height="1" fill="#687d93"/><rect x="9" y="4" width="1" height="1" fill="#687d93"/><rect x="3" y="6" width="1" height="1" fill="#687d93"/><rect x="7" y="6" width="1" height="1" fill="#687d93"/><rect x="1" y="8" width="1" height="1" fill="#687d93"/><rect x="5" y="8" width="1" height="1" fill="#687d93"/><rect x="9" y="8" width="1" height="1" fill="#687d93"/><rect x="3" y="10" width="1" height="1" fill="#687d93"/><rect x="7" y="10" width="1" height="1" fill="#687d93"/><rect x="1" y="12" width="1" height="1" fill="#687d93"/><rect x="5" y="12" width="1" height="1" fill="#687d93"/><rect x="9" y="12" width="1" height="1" fill="#687d93"/><rect x="3" y="14" width="1" height="1" fill="#687d93"/><rect x="7" y="14" width="1" height="1" fill="#687d93"/><rect x="1" y="16" width="1" height="1" fill="#687d93"/><rect x="5" y="16" width="1" height="1" fill="#687d93"/><rect x="9" y="16" width="1" height="1" fill="#687d93"/><rect x="3" y="18" width="1" height="1" fill="#687d93"/><rect x="7" y="18" width="1" height="1" fill="#687d93"/><rect x="1" y="20" width="1" height="1" fill="#687d93"/><rect x="5" y="20" width="1" height="1" fill="#687d93"/><rect x="9" y="20" width="1" height="1" fill="#687d93"/><rect x="3" y="22" width="1" height="1" fill="#687d93"/><rect x="7" y="22" width="1" height="1" fill="#687d93"/><rect x="1" y="24" width="1" height="1" fill="#687d93"/><rect x="5" y="24" width="1" height="1" fill="#687d93"/><rect x="9" y="24" width="1" height="1" fill="#687d93"/><rect x="3" y="26" width="1" height="1" fill="#687d93"/><rect x="7" y="26" width="1" height="1" fill="#687d93"/><rect x="1" y="28" width="1" height="1" fill="#687d93"/><rect x="5" y="28" width="1" height="1" fill="#687d93"/><rect x="9" y="28" width="1" height="1" fill="#687d93"/><rect x="3" y="30" width="1" height="1" fill="#687d93"/><rect x="7" y="30" width="1" height="1" fill="#687d93"/><rect x="1" y="32" width="1" height="1" fill="#687d93"/><rect x="5" y="32" width="1" height="1" fill="#687d93"/><rect x="9" y="32" width="1" height="1" fill="#687d93"/><rect x="3" y="34" width="1" height="1" fill="#687d93"/><rect x="7" y="34" width="1" height="1" fill="#687d93"/></svg>
<div class="btn" style="left:722px;top:50px"><svg width="36" height="36" viewBox="0 0 36 36"><rect x="0" y="0" width="36" height="36" fill="#eeeeee"/><path d="M1.5 34 V1.5 H34 M35.5 1 V35.5 H1" fill="none" stroke="#fbfbfb" stroke-width="1"/><rect x="0.5" y="0.5" width="34" height="34" fill="none" stroke="#8e8e8e" stroke-width="1"/><circle cx="24.59" cy="24.49" r="2.5" fill="#e8bc00" stroke="#141000" stroke-width="1.1"/><circle cx="12.01" cy="24.49" r="2.5" fill="#e8bc00" stroke="#141000" stroke-width="1.1"/><circle cx="12.01" cy="11.91" r="2.5" fill="#e8bc00" stroke="#141000" stroke-width="1.1"/><circle cx="24.59" cy="11.91" r="2.5" fill="#e8bc00" stroke="#141000" stroke-width="1.1"/><circle cx="18.30" cy="18.20" r="6.1" fill="none" stroke="#160a06" stroke-width="6.6"/><circle cx="18.30" cy="18.20" r="6.1" fill="none" stroke="#fbfbfb" stroke-width="4.9"/><circle cx="18.30" cy="18.20" r="6.1" fill="none" stroke="url(#gLife)" stroke-width="4.9" stroke-dasharray="4.791 4.791" transform="rotate(-22.5 18.30 18.20)"/><circle cx="18.30" cy="18.20" r="3.4" fill="#fdfdfd" stroke="#2a1a14" stroke-width="1"/></svg></div>
<svg class="a" style="left:6px;top:91px" width="11" height="35" viewBox="0 0 11 35"><rect width="11" height="35" fill="#fafafa" opacity="0.85"/><rect x="1" y="0" width="1" height="1" fill="#687d93"/><rect x="5" y="0" width="1" height="1" fill="#687d93"/><rect x="9" y="0" width="1" height="1" fill="#687d93"/><rect x="3" y="2" width="1" height="1" fill="#687d93"/><rect x="7" y="2" width="1" height="1" fill="#687d93"/><rect x="1" y="4" width="1" height="1" fill="#687d93"/><rect x="5" y="4" width="1" height="1" fill="#687d93"/><rect x="9" y="4" width="1" height="1" fill="#687d93"/><rect x="3" y="6" width="1" height="1" fill="#687d93"/><rect x="7" y="6" width="1" height="1" fill="#687d93"/><rect x="1" y="8" width="1" height="1" fill="#687d93"/><rect x="5" y="8" width="1" height="1" fill="#687d93"/><rect x="9" y="8" width="1" height="1" fill="#687d93"/><rect x="3" y="10" width="1" height="1" fill="#687d93"/><rect x="7" y="10" width="1" height="1" fill="#687d93"/><rect x="1" y="12" width="1" height="1" fill="#687d93"/><rect x="5" y="12" width="1" height="1" fill="#687d93"/><rect x="9" y="12" width="1" height="1" fill="#687d93"/><rect x="3" y="14" width="1" height="1" fill="#687d93"/><rect x="7" y="14" width="1" height="1" fill="#687d93"/><rect x="1" y="16" width="1" height="1" fill="#687d93"/><rect x="5" y="16" width="1" height="1" fill="#687d93"/><rect x="9" y="16" width="1" height="1" fill="#687d93"/><rect x="3" y="18" width="1" height="1" fill="#687d93"/><rect x="7" y="18" width="1" height="1" fill="#687d93"/><rect x="1" y="20" width="1" height="1" fill="#687d93"/><rect x="5" y="20" width="1" height="1" fill="#687d93"/><rect x="9" y="20" width="1" height="1" fill="#687d93"/><rect x="3" y="22" width="1" height="1" fill="#687d93"/><rect x="7" y="22" width="1" height="1" fill="#687d93"/><rect x="1" y="24" width="1" height="1" fill="#687d93"/><rect x="5" y="24" width="1" height="1" fill="#687d93"/><rect x="9" y="24" width="1" height="1" fill="#687d93"/><rect x="3" y="26" width="1" height="1" fill="#687d93"/><rect x="7" y="26" width="1" height="1" fill="#687d93"/><rect x="1" y="28" width="1" height="1" fill="#687d93"/><rect x="5" y="28" width="1" height="1" fill="#687d93"/><rect x="9" y="28" width="1" height="1" fill="#687d93"/><rect x="3" y="30" width="1" height="1" fill="#687d93"/><rect x="7" y="30" width="1" height="1" fill="#687d93"/><rect x="1" y="32" width="1" height="1" fill="#687d93"/><rect x="5" y="32" width="1" height="1" fill="#687d93"/><rect x="9" y="32" width="1" height="1" fill="#687d93"/><rect x="3" y="34" width="1" height="1" fill="#687d93"/><rect x="7" y="34" width="1" height="1" fill="#687d93"/></svg>
<div class="btn" style="left:20px;top:90px"><svg width="36" height="36" viewBox="0 0 36 36"><rect x="0" y="0" width="36" height="36" fill="#eeeeee"/><path d="M1.5 34 V1.5 H34 M35.5 1 V35.5 H1" fill="none" stroke="#fbfbfb" stroke-width="1"/><rect x="0.5" y="0.5" width="34" height="34" fill="none" stroke="#cdcdcd" stroke-width="1"/><path d="M10.1 15.5 L16.6 9 L16.6 12.4 C21.5 12.4 24.3 15.8 24.3 19.4 C24.3 22.8 22.2 25.8 19.8 26.8 L18.2 25.2 C19.6 24 20.2 22.6 20.2 21.4 C20.2 19.5 18.6 18.6 16.6 18.6 L16.6 22 Z" fill="#cacaca" stroke="#d2d2d2" stroke-width="0.6"/></svg></div>
<div class="btn" style="left:56px;top:90px"><svg width="36" height="36" viewBox="0 0 36 36"><rect x="0" y="0" width="36" height="36" fill="#eeeeee"/><path d="M1.5 34 V1.5 H34 M35.5 1 V35.5 H1" fill="none" stroke="#fbfbfb" stroke-width="1"/><rect x="0.5" y="0.5" width="34" height="34" fill="none" stroke="#cdcdcd" stroke-width="1"/><g transform="translate(35.7 0) scale(-1 1)"><path d="M10.1 15.5 L16.6 9 L16.6 12.4 C21.5 12.4 24.3 15.8 24.3 19.4 C24.3 22.8 22.2 25.8 19.8 26.8 L18.2 25.2 C19.6 24 20.2 22.6 20.2 21.4 C20.2 19.5 18.6 18.6 16.6 18.6 L16.6 22 Z" fill="#cacaca" stroke="#d2d2d2" stroke-width="0.6"/></g></svg></div>
<div class="btn" style="left:92px;top:90px"><svg width="36" height="36" viewBox="0 0 36 36"><rect x="0" y="0" width="36" height="36" fill="#eeeeee"/><path d="M1.5 34 V1.5 H34 M35.5 1 V35.5 H1" fill="none" stroke="#fbfbfb" stroke-width="1"/><rect x="0.5" y="0.5" width="34" height="34" fill="none" stroke="#8e8e8e" stroke-width="1"/><rect x="8.6" y="11.5" width="19.2" height="11" fill="url(#gLBv)" stroke="#000" stroke-width="1.3"/><g transform="translate(13.90 16.00) rotate(45.0) scale(1.00)"><path d="M0 0 L8.00 -2.40 L8.00 2.40 Z" fill="url(#gNib)" stroke="#0d5fca" stroke-width="1.1" stroke-linejoin="round"/><path d="M0 0 L2.64 0" stroke="#0d5fca" stroke-width="1.6" stroke-linecap="round"/><rect x="7.80" y="-2.60" width="7.40" height="5.20" rx="2.1" fill="url(#gPen)" stroke="#0d5fca" stroke-width="0.9"/></g></svg></div>
<svg class="a" style="left:132px;top:91px" width="11" height="35" viewBox="0 0 11 35"><rect width="11" height="35" fill="#fafafa" opacity="0.85"/><rect x="1" y="0" width="1" height="1" fill="#687d93"/><rect x="5" y="0" width="1" height="1" fill="#687d93"/><rect x="9" y="0" width="1" height="1" fill="#687d93"/><rect x="3" y="2" width="1" height="1" fill="#687d93"/><rect x="7" y="2" width="1" height="1" fill="#687d93"/><rect x="1" y="4" width="1" height="1" fill="#687d93"/><rect x="5" y="4" width="1" height="1" fill="#687d93"/><rect x="9" y="4" width="1" height="1" fill="#687d93"/><rect x="3" y="6" width="1" height="1" fill="#687d93"/><rect x="7" y="6" width="1" height="1" fill="#687d93"/><rect x="1" y="8" width="1" height="1" fill="#687d93"/><rect x="5" y="8" width="1" height="1" fill="#687d93"/><rect x="9" y="8" width="1" height="1" fill="#687d93"/><rect x="3" y="10" width="1" height="1" fill="#687d93"/><rect x="7" y="10" width="1" height="1" fill="#687d93"/><rect x="1" y="12" width="1" height="1" fill="#687d93"/><rect x="5" y="12" width="1" height="1" fill="#687d93"/><rect x="9" y="12" width="1" height="1" fill="#687d93"/><rect x="3" y="14" width="1" height="1" fill="#687d93"/><rect x="7" y="14" width="1" height="1" fill="#687d93"/><rect x="1" y="16" width="1" height="1" fill="#687d93"/><rect x="5" y="16" width="1" height="1" fill="#687d93"/><rect x="9" y="16" width="1" height="1" fill="#687d93"/><rect x="3" y="18" width="1" height="1" fill="#687d93"/><rect x="7" y="18" width="1" height="1" fill="#687d93"/><rect x="1" y="20" width="1" height="1" fill="#687d93"/><rect x="5" y="20" width="1" height="1" fill="#687d93"/><rect x="9" y="20" width="1" height="1" fill="#687d93"/><rect x="3" y="22" width="1" height="1" fill="#687d93"/><rect x="7" y="22" width="1" height="1" fill="#687d93"/><rect x="1" y="24" width="1" height="1" fill="#687d93"/><rect x="5" y="24" width="1" height="1" fill="#687d93"/><rect x="9" y="24" width="1" height="1" fill="#687d93"/><rect x="3" y="26" width="1" height="1" fill="#687d93"/><rect x="7" y="26" width="1" height="1" fill="#687d93"/><rect x="1" y="28" width="1" height="1" fill="#687d93"/><rect x="5" y="28" width="1" height="1" fill="#687d93"/><rect x="9" y="28" width="1" height="1" fill="#687d93"/><rect x="3" y="30" width="1" height="1" fill="#687d93"/><rect x="7" y="30" width="1" height="1" fill="#687d93"/><rect x="1" y="32" width="1" height="1" fill="#687d93"/><rect x="5" y="32" width="1" height="1" fill="#687d93"/><rect x="9" y="32" width="1" height="1" fill="#687d93"/><rect x="3" y="34" width="1" height="1" fill="#687d93"/><rect x="7" y="34" width="1" height="1" fill="#687d93"/></svg>
<div class="btn" style="left:146px;top:90px"><svg width="36" height="36" viewBox="0 0 36 36"><rect x="0" y="0" width="36" height="36" fill="#eeeeee"/><path d="M1.5 34 V1.5 H34 M35.5 1 V35.5 H1" fill="none" stroke="#fbfbfb" stroke-width="1"/><rect x="0.5" y="0.5" width="34" height="34" fill="none" stroke="#8e8e8e" stroke-width="1"/><g transform="translate(0 0.4)"><path d="M19 13.9 L20.6 11.9 L27.3 11.9 L27.3 13.9 Z" fill="#5c1f1f"/><path d="M11.1 14.2 L26.8 14.2 L26.8 25.5 L11.1 25.5 Z" fill="url(#pChk)" stroke="#000" stroke-width="1.2"/><rect x="11.8" y="14.9" width="10.4" height="2.3" fill="#fff"/><path d="M7.5 17.7 L23 17.7 L26.3 25.5 L10.5 25.5 Z" fill="url(#pChk)" stroke="#000" stroke-width="1.3" stroke-linejoin="round"/><path d="M10.4 25.6 L26.4 25.6" stroke="#000" stroke-width="1.5"/><path d="M8.9 18.9 L22.6 18.9" stroke="#fff" stroke-width="1.1"/></g><path d="M9.40 10.30 L12.60 7.10 L17.60 7.10 L14.40 10.30 Z" fill="#eef4fc" stroke="#1a66cc" stroke-width="1.20" stroke-linejoin="round"/><path d="M14.40 10.30 L17.60 7.10 L17.60 12.10 L14.40 15.30 Z" fill="#dbe7f8" stroke="#1a66cc" stroke-width="1.20" stroke-linejoin="round"/><rect x="9.40" y="10.30" width="5.00" height="5.00" fill="url(#gLBc)" stroke="#1a66cc" stroke-width="1.20" stroke-linejoin="round"/></svg></div>
<div class="btn" style="left:182px;top:90px"><svg width="36" height="36" viewBox="0 0 36 36"><rect x="0" y="0" width="36" height="36" fill="#eeeeee"/><path d="M1.5 34 V1.5 H34 M35.5 1 V35.5 H1" fill="none" stroke="#fbfbfb" stroke-width="1"/><rect x="0.5" y="0.5" width="34" height="34" fill="none" stroke="#8e8e8e" stroke-width="1"/><path d="M9.40 12.80 L13.00 8.40 L22.80 8.40 L19.20 12.80 Z" fill="#eef4fc" stroke="#1a66cc" stroke-width="1.40" stroke-linejoin="round"/><path d="M19.20 12.80 L22.80 8.40 L22.80 17.00 L19.20 21.40 Z" fill="#dbe7f8" stroke="#1a66cc" stroke-width="1.40" stroke-linejoin="round"/><rect x="9.40" y="12.80" width="9.80" height="8.60" fill="url(#gLBc)" stroke="#1a66cc" stroke-width="1.40" stroke-linejoin="round"/><path d="M13.70 18.80 L17.40 14.20 L26.50 14.20 L22.80 18.80 Z" fill="#eef4fc" stroke="#1a66cc" stroke-width="1.40" stroke-linejoin="round"/><path d="M22.80 18.80 L26.50 14.20 L26.50 22.80 L22.80 27.40 Z" fill="#dbe7f8" stroke="#1a66cc" stroke-width="1.40" stroke-linejoin="round"/><rect x="13.70" y="18.80" width="9.10" height="8.60" fill="url(#gLBc)" stroke="#1a66cc" stroke-width="1.40" stroke-linejoin="round"/></svg></div>
<div class="btn" style="left:218px;top:90px"><svg width="36" height="36" viewBox="0 0 36 36"><rect x="0" y="0" width="36" height="36" fill="#eeeeee"/><path d="M1.5 34 V1.5 H34 M35.5 1 V35.5 H1" fill="none" stroke="#fbfbfb" stroke-width="1"/><rect x="0.5" y="0.5" width="34" height="34" fill="none" stroke="#8e8e8e" stroke-width="1"/><rect x="8.6" y="8.6" width="18" height="17.8" rx="1.6" fill="#fff" stroke="#000" stroke-width="1.5"/><rect x="11.6" y="9.4" width="12.4" height="6.6" fill="#c6c6c6"/><rect x="15.2" y="9.4" width="3.8" height="6.2" fill="#5a5a5a"/><rect x="19.2" y="10" width="2.8" height="5.4" fill="#d4d4d4"/><path d="M11.6 18.6 H23.6 M11.6 20.6 H23.6 M11.6 22.6 H23.6 M11.6 24.6 H23.6" stroke="#c4c4c4" stroke-width="1"/><rect x="10.2" y="17" width="1" height="9" fill="#aaa"/><path d="M20.60 23.60 L23.80 20.40 L28.40 20.40 L25.20 23.60 Z" fill="#eef4fc" stroke="#1a66cc" stroke-width="1.20" stroke-linejoin="round"/><path d="M25.20 23.60 L28.40 20.40 L28.40 25.00 L25.20 28.20 Z" fill="#dbe7f8" stroke="#1a66cc" stroke-width="1.20" stroke-linejoin="round"/><rect x="20.60" y="23.60" width="4.60" height="4.60" fill="url(#gLBc)" stroke="#1a66cc" stroke-width="1.20" stroke-linejoin="round"/></svg></div>
<div class="btn" style="left:254px;top:90px"><svg width="36" height="36" viewBox="0 0 36 36"><rect x="0" y="0" width="36" height="36" fill="#eeeeee"/><path d="M1.5 34 V1.5 H34 M35.5 1 V35.5 H1" fill="none" stroke="#fbfbfb" stroke-width="1"/><rect x="0.5" y="0.5" width="34" height="34" fill="none" stroke="#8e8e8e" stroke-width="1"/><path d="M8.40 14.60 L14.60 8.20 L27.80 8.20 L21.60 14.60 Z" fill="#eef4fc" stroke="#1a66cc" stroke-width="1.40" stroke-linejoin="round"/><path d="M21.60 14.60 L27.80 8.20 L27.80 21.20 L21.60 27.60 Z" fill="#dbe7f8" stroke="#1a66cc" stroke-width="1.40" stroke-linejoin="round"/><rect x="8.40" y="14.60" width="13.20" height="13.00" fill="url(#gLBc)" stroke="#1a66cc" stroke-width="1.40" stroke-linejoin="round"/><path d="M15 13 L24 22 M24 13 L15 22" stroke="url(#gX2)" stroke-width="3.2" fill="none"/></svg></div>
<div class="btn" style="left:290px;top:90px"><svg width="36" height="36" viewBox="0 0 36 36"><rect x="0" y="0" width="36" height="36" fill="#eeeeee"/><path d="M1.5 34 V1.5 H34 M35.5 1 V35.5 H1" fill="none" stroke="#fbfbfb" stroke-width="1"/><rect x="0.5" y="0.5" width="34" height="34" fill="none" stroke="#8e8e8e" stroke-width="1"/><rect x="12.8" y="8.4" width="10.2" height="5.2" fill="#e8f0fa" stroke="#8a9098" stroke-width="0.9"/><rect x="8.4" y="13.2" width="19.2" height="11.4" rx="2.2" fill="url(#gPr)" stroke="#8c9496" stroke-width="0.8"/><rect x="11.8" y="14.6" width="12.4" height="2.4" fill="#4a5258"/><rect x="11.8" y="20.8" width="12.4" height="4.2" fill="#363c44"/><rect x="12.6" y="24.2" width="10.8" height="3.4" fill="#e6e4f4" stroke="#8a8e98" stroke-width="0.8"/></svg></div>
<svg class="a" style="left:330px;top:91px" width="11" height="35" viewBox="0 0 11 35"><rect width="11" height="35" fill="#fafafa" opacity="0.85"/><rect x="1" y="0" width="1" height="1" fill="#687d93"/><rect x="5" y="0" width="1" height="1" fill="#687d93"/><rect x="9" y="0" width="1" height="1" fill="#687d93"/><rect x="3" y="2" width="1" height="1" fill="#687d93"/><rect x="7" y="2" width="1" height="1" fill="#687d93"/><rect x="1" y="4" width="1" height="1" fill="#687d93"/><rect x="5" y="4" width="1" height="1" fill="#687d93"/><rect x="9" y="4" width="1" height="1" fill="#687d93"/><rect x="3" y="6" width="1" height="1" fill="#687d93"/><rect x="7" y="6" width="1" height="1" fill="#687d93"/><rect x="1" y="8" width="1" height="1" fill="#687d93"/><rect x="5" y="8" width="1" height="1" fill="#687d93"/><rect x="9" y="8" width="1" height="1" fill="#687d93"/><rect x="3" y="10" width="1" height="1" fill="#687d93"/><rect x="7" y="10" width="1" height="1" fill="#687d93"/><rect x="1" y="12" width="1" height="1" fill="#687d93"/><rect x="5" y="12" width="1" height="1" fill="#687d93"/><rect x="9" y="12" width="1" height="1" fill="#687d93"/><rect x="3" y="14" width="1" height="1" fill="#687d93"/><rect x="7" y="14" width="1" height="1" fill="#687d93"/><rect x="1" y="16" width="1" height="1" fill="#687d93"/><rect x="5" y="16" width="1" height="1" fill="#687d93"/><rect x="9" y="16" width="1" height="1" fill="#687d93"/><rect x="3" y="18" width="1" height="1" fill="#687d93"/><rect x="7" y="18" width="1" height="1" fill="#687d93"/><rect x="1" y="20" width="1" height="1" fill="#687d93"/><rect x="5" y="20" width="1" height="1" fill="#687d93"/><rect x="9" y="20" width="1" height="1" fill="#687d93"/><rect x="3" y="22" width="1" height="1" fill="#687d93"/><rect x="7" y="22" width="1" height="1" fill="#687d93"/><rect x="1" y="24" width="1" height="1" fill="#687d93"/><rect x="5" y="24" width="1" height="1" fill="#687d93"/><rect x="9" y="24" width="1" height="1" fill="#687d93"/><rect x="3" y="26" width="1" height="1" fill="#687d93"/><rect x="7" y="26" width="1" height="1" fill="#687d93"/><rect x="1" y="28" width="1" height="1" fill="#687d93"/><rect x="5" y="28" width="1" height="1" fill="#687d93"/><rect x="9" y="28" width="1" height="1" fill="#687d93"/><rect x="3" y="30" width="1" height="1" fill="#687d93"/><rect x="7" y="30" width="1" height="1" fill="#687d93"/><rect x="1" y="32" width="1" height="1" fill="#687d93"/><rect x="5" y="32" width="1" height="1" fill="#687d93"/><rect x="9" y="32" width="1" height="1" fill="#687d93"/><rect x="3" y="34" width="1" height="1" fill="#687d93"/><rect x="7" y="34" width="1" height="1" fill="#687d93"/></svg>
<div class="btn" style="left:344px;top:90px"><svg width="36" height="36" viewBox="0 0 36 36"><rect x="0" y="0" width="36" height="36" fill="#eeeeee"/><path d="M1.5 34 V1.5 H34 M35.5 1 V35.5 H1" fill="none" stroke="#fbfbfb" stroke-width="1"/><rect x="0.5" y="0.5" width="34" height="34" fill="none" stroke="#8e8e8e" stroke-width="1"/><rect x="12.6" y="13.4" width="15.8" height="14" fill="url(#gLBc)" stroke="#000" stroke-width="1.3"/><rect x="7.6" y="9.6" width="7.6" height="6.6" fill="url(#gLBc)" stroke="#000" stroke-width="1.3"/><path d="M9.5 16.8 L9.5 20.5 L21.5 20.5 L21.5 11.5 L15.8 11.5" fill="none" stroke="#000" stroke-width="1" stroke-dasharray="2 1.6"/><path d="M13 14.5 L23.2 24.2" stroke="#000" stroke-width="1.3" fill="none"/><path d="M19.4 24.4 L23.6 24.4 L23.6 20.2" fill="none" stroke="#000" stroke-width="1.7"/></svg></div>
<div class="btn" style="left:380px;top:90px"><svg width="36" height="36" viewBox="0 0 36 36"><rect x="0" y="0" width="36" height="36" fill="#eeeeee"/><path d="M1.5 34 V1.5 H34 M35.5 1 V35.5 H1" fill="none" stroke="#fbfbfb" stroke-width="1"/><rect x="0.5" y="0.5" width="34" height="34" fill="none" stroke="#8e8e8e" stroke-width="1"/><path d="M7.6 7.6 L15.6 7.6 L28.4 20.5 L7.6 20.5 Z" fill="url(#gLBc)" stroke="#000" stroke-width="1.3" stroke-linejoin="round"/><path d="M8.2 8.2 L20.4 20.4 M15.6 17.4 L15.6 20.5" fill="none" stroke="#000" stroke-width="1.3"/><path d="M10.3 11 L13 20 M17.3 10 L21.3 20" fill="none" stroke="#000" stroke-width="1" stroke-dasharray="2 1.5"/><path d="M12.2 25.4 L23 25.4" stroke="#000" stroke-width="1.3"/><path d="M25.3 25.4 L21.4 21.9 L22.6 25.4 L21.4 28.9 Z" fill="#000"/></svg></div>
<div class="btn" style="left:416px;top:90px"><svg width="36" height="36" viewBox="0 0 36 36"><rect x="0" y="0" width="36" height="36" fill="#eeeeee"/><path d="M1.5 34 V1.5 H34 M35.5 1 V35.5 H1" fill="none" stroke="#fbfbfb" stroke-width="1"/><rect x="0.5" y="0.5" width="34" height="34" fill="none" stroke="#8e8e8e" stroke-width="1"/><path d="M6.40 13.40 L12.60 7.40 L17.20 7.40 L11.00 13.40 Z" fill="#eef4fc" stroke="#1a66cc" stroke-width="1.20" stroke-linejoin="round"/><path d="M11.00 13.40 L17.20 7.40 L17.20 20.40 L11.00 26.40 Z" fill="#dbe7f8" stroke="#1a66cc" stroke-width="1.20" stroke-linejoin="round"/><rect x="6.40" y="13.40" width="4.60" height="13.00" fill="url(#gLBc)" stroke="#1a66cc" stroke-width="1.20" stroke-linejoin="round"/><path d="M16.40 13.40 L23.20 7.40 L29.20 7.40 L22.40 13.40 Z" fill="#eef4fc" stroke="#1a66cc" stroke-width="1.20" stroke-linejoin="round"/><path d="M22.40 13.40 L29.20 7.40 L29.20 20.40 L22.40 26.40 Z" fill="#dbe7f8" stroke="#1a66cc" stroke-width="1.20" stroke-linejoin="round"/><rect x="16.40" y="13.40" width="6.00" height="13.00" fill="url(#gLBc)" stroke="#1a66cc" stroke-width="1.20" stroke-linejoin="round"/><path d="M6.30 17.50 L12.60 11.20 L12.60 14.90 L14.60 14.90 L14.60 20.10 L12.60 20.10 L12.60 23.80 Z" fill="url(#gOr)" stroke="#dd1100" stroke-width="1" stroke-linejoin="round"/><path d="M27.80 17.50 L21.60 11.20 L21.60 14.90 L19.60 14.90 L19.60 20.10 L21.60 20.10 L21.60 23.80 Z" fill="url(#gOr)" stroke="#dd1100" stroke-width="1" stroke-linejoin="round"/></svg></div>
<div class="btn" style="left:452px;top:90px"><svg width="36" height="36" viewBox="0 0 36 36"><rect x="0" y="0" width="36" height="36" fill="#eeeeee"/><path d="M1.5 34 V1.5 H34 M35.5 1 V35.5 H1" fill="none" stroke="#fbfbfb" stroke-width="1"/><rect x="0.5" y="0.5" width="34" height="34" fill="none" stroke="#8e8e8e" stroke-width="1"/><path d="M10.30 15.40 L16.30 8.20 L29.60 8.20 L23.60 15.40 Z" fill="#eef4fc" stroke="#1a66cc" stroke-width="1.30" stroke-linejoin="round"/><path d="M23.60 15.40 L29.60 8.20 L29.60 20.40 L23.60 27.60 Z" fill="#dbe7f8" stroke="#1a66cc" stroke-width="1.30" stroke-linejoin="round"/><rect x="10.30" y="15.40" width="13.30" height="12.20" fill="url(#gLBc)" stroke="#1a66cc" stroke-width="1.30" stroke-linejoin="round"/><path d="M16.40 15.40 L16.40 27.60" stroke="#1a66cc" stroke-width="1.30" fill="none" /><path d="M16.40 15.40 L22.40 8.20" stroke="#1a66cc" stroke-width="1.30" fill="none" /><path d="M15.00 17.50 L8.60 11.50 L8.60 14.90 L6.40 14.90 L6.40 20.10 L8.60 20.10 L8.60 23.50 Z" fill="#f2a6a6" stroke="#dd1100" stroke-width="1" stroke-linejoin="round"/><path d="M18.20 17.50 L24.60 11.50 L24.60 14.90 L26.80 14.90 L26.80 20.10 L24.60 20.10 L24.60 23.50 Z" fill="#f2a6a6" stroke="#dd1100" stroke-width="1" stroke-linejoin="round"/></svg></div>
<svg class="a" style="left:492px;top:91px" width="11" height="35" viewBox="0 0 11 35"><rect width="11" height="35" fill="#fafafa" opacity="0.85"/><rect x="1" y="0" width="1" height="1" fill="#687d93"/><rect x="5" y="0" width="1" height="1" fill="#687d93"/><rect x="9" y="0" width="1" height="1" fill="#687d93"/><rect x="3" y="2" width="1" height="1" fill="#687d93"/><rect x="7" y="2" width="1" height="1" fill="#687d93"/><rect x="1" y="4" width="1" height="1" fill="#687d93"/><rect x="5" y="4" width="1" height="1" fill="#687d93"/><rect x="9" y="4" width="1" height="1" fill="#687d93"/><rect x="3" y="6" width="1" height="1" fill="#687d93"/><rect x="7" y="6" width="1" height="1" fill="#687d93"/><rect x="1" y="8" width="1" height="1" fill="#687d93"/><rect x="5" y="8" width="1" height="1" fill="#687d93"/><rect x="9" y="8" width="1" height="1" fill="#687d93"/><rect x="3" y="10" width="1" height="1" fill="#687d93"/><rect x="7" y="10" width="1" height="1" fill="#687d93"/><rect x="1" y="12" width="1" height="1" fill="#687d93"/><rect x="5" y="12" width="1" height="1" fill="#687d93"/><rect x="9" y="12" width="1" height="1" fill="#687d93"/><rect x="3" y="14" width="1" height="1" fill="#687d93"/><rect x="7" y="14" width="1" height="1" fill="#687d93"/><rect x="1" y="16" width="1" height="1" fill="#687d93"/><rect x="5" y="16" width="1" height="1" fill="#687d93"/><rect x="9" y="16" width="1" height="1" fill="#687d93"/><rect x="3" y="18" width="1" height="1" fill="#687d93"/><rect x="7" y="18" width="1" height="1" fill="#687d93"/><rect x="1" y="20" width="1" height="1" fill="#687d93"/><rect x="5" y="20" width="1" height="1" fill="#687d93"/><rect x="9" y="20" width="1" height="1" fill="#687d93"/><rect x="3" y="22" width="1" height="1" fill="#687d93"/><rect x="7" y="22" width="1" height="1" fill="#687d93"/><rect x="1" y="24" width="1" height="1" fill="#687d93"/><rect x="5" y="24" width="1" height="1" fill="#687d93"/><rect x="9" y="24" width="1" height="1" fill="#687d93"/><rect x="3" y="26" width="1" height="1" fill="#687d93"/><rect x="7" y="26" width="1" height="1" fill="#687d93"/><rect x="1" y="28" width="1" height="1" fill="#687d93"/><rect x="5" y="28" width="1" height="1" fill="#687d93"/><rect x="9" y="28" width="1" height="1" fill="#687d93"/><rect x="3" y="30" width="1" height="1" fill="#687d93"/><rect x="7" y="30" width="1" height="1" fill="#687d93"/><rect x="1" y="32" width="1" height="1" fill="#687d93"/><rect x="5" y="32" width="1" height="1" fill="#687d93"/><rect x="9" y="32" width="1" height="1" fill="#687d93"/><rect x="3" y="34" width="1" height="1" fill="#687d93"/><rect x="7" y="34" width="1" height="1" fill="#687d93"/></svg>
<div class="btn" style="left:506px;top:90px"><svg width="36" height="36" viewBox="0 0 36 36"><rect x="0" y="0" width="36" height="36" fill="#eeeeee"/><path d="M1.5 34 V1.5 H34 M35.5 1 V35.5 H1" fill="none" stroke="#fbfbfb" stroke-width="1"/><rect x="0.5" y="0.5" width="34" height="34" fill="none" stroke="#8e8e8e" stroke-width="1"/><path d="M12.3 8.4 L12.3 22.8 L16 19.8 L19 26 Q19.6 26.8 20.6 26.3 Q21.8 25.7 21.4 24.8 L18.6 18.7 L22.8 18.7 Z" fill="#f1f1f1" stroke="#000" stroke-width="1.05" stroke-linejoin="round"/></svg></div>
<div class="btn" style="left:542px;top:90px"><svg width="36" height="36" viewBox="0 0 36 36"><rect x="0" y="0" width="36" height="36" fill="#eeeeee"/><path d="M1.5 34 V1.5 H34 M35.5 1 V35.5 H1" fill="none" stroke="#fbfbfb" stroke-width="1"/><rect x="0.5" y="0.5" width="34" height="34" fill="none" stroke="#8e8e8e" stroke-width="1"/><path d="M19.8 19.8 L24.6 24.2" stroke="#5a4a20" stroke-width="3.2" stroke-linecap="round"/><path d="M20.2 20.2 L24.5 24.1" stroke="#f2b040" stroke-width="1.8" stroke-linecap="round"/><circle cx="15.9" cy="15.8" r="5.3" fill="#c6d4fb" stroke="#727a92" stroke-width="1.2"/><path d="M12.3 13.8 A4.2 4.2 0 0 1 17 11.8" fill="none" stroke="#fff" stroke-width="1.2"/><path d="M13 16 H19" stroke="#111" stroke-width="1.9"/><path d="M16 13 V19" stroke="#111" stroke-width="1.9"/></svg></div>
<div class="btn" style="left:578px;top:90px"><svg width="36" height="36" viewBox="0 0 36 36"><rect x="0" y="0" width="36" height="36" fill="#eeeeee"/><path d="M1.5 34 V1.5 H34 M35.5 1 V35.5 H1" fill="none" stroke="#fbfbfb" stroke-width="1"/><rect x="0.5" y="0.5" width="34" height="34" fill="none" stroke="#8e8e8e" stroke-width="1"/><path d="M19.8 19.8 L24.6 24.2" stroke="#5a4a20" stroke-width="3.2" stroke-linecap="round"/><path d="M20.2 20.2 L24.5 24.1" stroke="#f2b040" stroke-width="1.8" stroke-linecap="round"/><circle cx="15.9" cy="15.8" r="5.3" fill="#c6d4fb" stroke="#727a92" stroke-width="1.2"/><path d="M12.3 13.8 A4.2 4.2 0 0 1 17 11.8" fill="none" stroke="#fff" stroke-width="1.2"/><path d="M13 16 H19" stroke="#111" stroke-width="1.9"/></svg></div>
<div class="btn" style="left:614px;top:90px"><svg width="36" height="36" viewBox="0 0 36 36"><rect x="0" y="0" width="36" height="36" fill="#eeeeee"/><path d="M1.5 34 V1.5 H34 M35.5 1 V35.5 H1" fill="none" stroke="#fbfbfb" stroke-width="1"/><rect x="0.5" y="0.5" width="34" height="34" fill="none" stroke="#8e8e8e" stroke-width="1"/><rect x="11.4" y="11.4" width="13.2" height="13.2" fill="url(#gFit)" stroke="#1a66cc" stroke-width="1.5"/><path d="M15.8 7.2 L21.2 7.2 L18.5 10 Z M15.8 28.8 L21.2 28.8 L18.5 26 Z M7.1 15.3 L7.1 20.7 L10 18 Z M29.2 15.3 L29.2 20.7 L26.3 18 Z" fill="#1a66cc"/></svg></div>
<div class="btn" style="left:650px;top:90px"><svg width="36" height="36" viewBox="0 0 36 36"><rect x="0" y="0" width="36" height="36" fill="#eeeeee"/><path d="M1.5 34 V1.5 H34 M35.5 1 V35.5 H1" fill="none" stroke="#fbfbfb" stroke-width="1"/><rect x="0.5" y="0.5" width="34" height="34" fill="none" stroke="#8e8e8e" stroke-width="1"/><text x="18.4" y="25.6" text-anchor="middle" font-family="Liberation Serif" font-weight="bold" font-size="24" fill="#0b4a91" stroke="#0b4a91" stroke-width="0.5">T</text></svg></div>
<div class="btn" style="left:686px;top:90px"><svg width="36" height="36" viewBox="0 0 36 36"><rect x="0" y="0" width="36" height="36" fill="#eeeeee"/><path d="M1.5 34 V1.5 H34 M35.5 1 V35.5 H1" fill="none" stroke="#fbfbfb" stroke-width="1"/><rect x="0.5" y="0.5" width="34" height="34" fill="none" stroke="#8e8e8e" stroke-width="1"/><path d="M8.4 15.4 H21.4 V27.6 H8.4 Z M14.2 8.4 H27.6 V20.8 H14.2 Z M8.4 15.4 L14.2 8.4 M21.4 15.4 L27.6 8.4 M21.4 27.6 L27.6 20.8 M8.4 27.6 L14.2 20.8" fill="none" stroke="#1a66cc" stroke-width="1.1" stroke-linejoin="round"/></svg></div>
<div class="btn" style="left:722px;top:90px"><svg width="36" height="36" viewBox="0 0 36 36"><rect x="0" y="0" width="36" height="36" fill="#eeeeee"/><path d="M1.5 34 V1.5 H34 M35.5 1 V35.5 H1" fill="none" stroke="#fbfbfb" stroke-width="1"/><rect x="0.5" y="0.5" width="34" height="34" fill="none" stroke="#cdcdcd" stroke-width="1"/><rect x="9.2" y="8.3" width="17.6" height="18.3" fill="#d4d4d4"/><rect x="9.50" y="8.60" width="5.2" height="5.4" fill="#bebebe"/><rect x="15.40" y="8.60" width="5.2" height="5.4" fill="#cbcbcb"/><rect x="21.30" y="8.60" width="5.2" height="5.4" fill="#c3c3c3"/><rect x="9.50" y="14.70" width="5.2" height="5.4" fill="#bebebe"/><rect x="15.40" y="14.70" width="5.2" height="5.4" fill="#cdcdcd"/><rect x="21.30" y="14.70" width="5.2" height="5.4" fill="#c9c9c9"/><rect x="9.50" y="20.80" width="5.2" height="5.4" fill="#cacaca"/><rect x="15.40" y="20.80" width="5.2" height="5.4" fill="#cdcdcd"/><rect x="21.30" y="20.80" width="5.2" height="5.4" fill="#c6c6c6"/><path d="M22 13.5 L23.2 17 L18 27.5 L14.5 28.3 L16.5 22 Z" fill="#d6d6d6"/></svg></div>
<div class="a" style="left:760px;top:128px;width:78px;height:1px;background:#eeeeee"></div>
<div class="a" style="left:4px;top:129px;width:309px;height:548px;border-left:1px solid #7a8a99;border-top:1px solid #7a8a99"></div>
<div class="a" style="left:312px;top:130px;width:1px;height:547px;background:#fbfbfb"></div>
<div class="a" style="left:5px;top:130px;width:307px;height:1px;background:#f6f6f6"></div>
<div class="a" style="left:5px;top:130px;width:1px;height:547px;background:#f6f6f6"></div>
<svg class="a" style="left:313px;top:129px" width="6" height="548" viewBox="0 0 6 548"><rect width="6" height="548" fill="#f2f2f2"/><rect x="3" y="4" width="1" height="1" fill="#6f8296"/><rect x="3" y="8" width="1" height="1" fill="#6f8296"/><rect x="3" y="12" width="1" height="1" fill="#6f8296"/><rect x="3" y="16" width="1" height="1" fill="#6f8296"/><rect x="3" y="20" width="1" height="1" fill="#6f8296"/><rect x="3" y="24" width="1" height="1" fill="#6f8296"/><rect x="3" y="28" width="1" height="1" fill="#6f8296"/><rect x="3" y="32" width="1" height="1" fill="#6f8296"/><rect x="3" y="36" width="1" height="1" fill="#6f8296"/><rect x="3" y="40" width="1" height="1" fill="#6f8296"/><rect x="3" y="44" width="1" height="1" fill="#6f8296"/><rect x="3" y="48" width="1" height="1" fill="#6f8296"/><rect x="3" y="52" width="1" height="1" fill="#6f8296"/><rect x="3" y="56" width="1" height="1" fill="#6f8296"/><rect x="3" y="60" width="1" height="1" fill="#6f8296"/><rect x="3" y="64" width="1" height="1" fill="#6f8296"/><rect x="3" y="68" width="1" height="1" fill="#6f8296"/><rect x="3" y="72" width="1" height="1" fill="#6f8296"/><rect x="3" y="76" width="1" height="1" fill="#6f8296"/><rect x="3" y="80" width="1" height="1" fill="#6f8296"/><rect x="3" y="84" width="1" height="1" fill="#6f8296"/><rect x="3" y="88" width="1" height="1" fill="#6f8296"/><rect x="3" y="92" width="1" height="1" fill="#6f8296"/><rect x="3" y="96" width="1" height="1" fill="#6f8296"/><rect x="3" y="100" width="1" height="1" fill="#6f8296"/><rect x="3" y="104" width="1" height="1" fill="#6f8296"/><rect x="3" y="108" width="1" height="1" fill="#6f8296"/><rect x="3" y="112" width="1" height="1" fill="#6f8296"/><rect x="3" y="116" width="1" height="1" fill="#6f8296"/><rect x="3" y="120" width="1" height="1" fill="#6f8296"/><rect x="3" y="124" width="1" height="1" fill="#6f8296"/><rect x="3" y="128" width="1" height="1" fill="#6f8296"/><rect x="3" y="132" width="1" height="1" fill="#6f8296"/><rect x="3" y="136" width="1" height="1" fill="#6f8296"/><rect x="3" y="140" width="1" height="1" fill="#6f8296"/><rect x="3" y="144" width="1" height="1" fill="#6f8296"/><rect x="3" y="148" width="1" height="1" fill="#6f8296"/><rect x="3" y="152" width="1" height="1" fill="#6f8296"/><rect x="3" y="156" width="1" height="1" fill="#6f8296"/><rect x="3" y="160" width="1" height="1" fill="#6f8296"/><rect x="3" y="164" width="1" height="1" fill="#6f8296"/><rect x="3" y="168" width="1" height="1" fill="#6f8296"/><rect x="3" y="172" width="1" height="1" fill="#6f8296"/><rect x="3" y="176" width="1" height="1" fill="#6f8296"/><rect x="3" y="180" width="1" height="1" fill="#6f8296"/><rect x="3" y="184" width="1" height="1" fill="#6f8296"/><rect x="3" y="188" width="1" height="1" fill="#6f8296"/><rect x="3" y="192" width="1" height="1" fill="#6f8296"/><rect x="3" y="196" width="1" height="1" fill="#6f8296"/><rect x="3" y="200" width="1" height="1" fill="#6f8296"/><rect x="3" y="204" width="1" height="1" fill="#6f8296"/><rect x="3" y="208" width="1" height="1" fill="#6f8296"/><rect x="3" y="212" width="1" height="1" fill="#6f8296"/><rect x="3" y="216" width="1" height="1" fill="#6f8296"/><rect x="3" y="220" width="1" height="1" fill="#6f8296"/><rect x="3" y="224" width="1" height="1" fill="#6f8296"/><rect x="3" y="228" width="1" height="1" fill="#6f8296"/><rect x="3" y="232" width="1" height="1" fill="#6f8296"/><rect x="3" y="236" width="1" height="1" fill="#6f8296"/><rect x="3" y="240" width="1" height="1" fill="#6f8296"/><rect x="3" y="244" width="1" height="1" fill="#6f8296"/><rect x="3" y="248" width="1" height="1" fill="#6f8296"/><rect x="3" y="252" width="1" height="1" fill="#6f8296"/><rect x="3" y="256" width="1" height="1" fill="#6f8296"/><rect x="3" y="260" width="1" height="1" fill="#6f8296"/><rect x="3" y="264" width="1" height="1" fill="#6f8296"/><rect x="3" y="268" width="1" height="1" fill="#6f8296"/><rect x="3" y="272" width="1" height="1" fill="#6f8296"/><rect x="3" y="276" width="1" height="1" fill="#6f8296"/><rect x="3" y="280" width="1" height="1" fill="#6f8296"/><rect x="3" y="284" width="1" height="1" fill="#6f8296"/><rect x="3" y="288" width="1" height="1" fill="#6f8296"/><rect x="3" y="292" width="1" height="1" fill="#6f8296"/><rect x="3" y="296" width="1" height="1" fill="#6f8296"/><rect x="3" y="300" width="1" height="1" fill="#6f8296"/><rect x="3" y="304" width="1" height="1" fill="#6f8296"/><rect x="3" y="308" width="1" height="1" fill="#6f8296"/><rect x="3" y="312" width="1" height="1" fill="#6f8296"/><rect x="3" y="316" width="1" height="1" fill="#6f8296"/><rect x="3" y="320" width="1" height="1" fill="#6f8296"/><rect x="3" y="324" width="1" height="1" fill="#6f8296"/><rect x="3" y="328" width="1" height="1" fill="#6f8296"/><rect x="3" y="332" width="1" height="1" fill="#6f8296"/><rect x="3" y="336" width="1" height="1" fill="#6f8296"/><rect x="3" y="340" width="1" height="1" fill="#6f8296"/><rect x="3" y="344" width="1" height="1" fill="#6f8296"/><rect x="3" y="348" width="1" height="1" fill="#6f8296"/><rect x="3" y="352" width="1" height="1" fill="#6f8296"/><rect x="3" y="356" width="1" height="1" fill="#6f8296"/><rect x="3" y="360" width="1" height="1" fill="#6f8296"/><rect x="3" y="364" width="1" height="1" fill="#6f8296"/><rect x="3" y="368" width="1" height="1" fill="#6f8296"/><rect x="3" y="372" width="1" height="1" fill="#6f8296"/><rect x="3" y="376" width="1" height="1" fill="#6f8296"/><rect x="3" y="380" width="1" height="1" fill="#6f8296"/><rect x="3" y="384" width="1" height="1" fill="#6f8296"/><rect x="3" y="388" width="1" height="1" fill="#6f8296"/><rect x="3" y="392" width="1" height="1" fill="#6f8296"/><rect x="3" y="396" width="1" height="1" fill="#6f8296"/><rect x="3" y="400" width="1" height="1" fill="#6f8296"/><rect x="3" y="404" width="1" height="1" fill="#6f8296"/><rect x="3" y="408" width="1" height="1" fill="#6f8296"/><rect x="3" y="412" width="1" height="1" fill="#6f8296"/><rect x="3" y="416" width="1" height="1" fill="#6f8296"/><rect x="3" y="420" width="1" height="1" fill="#6f8296"/><rect x="3" y="424" width="1" height="1" fill="#6f8296"/><rect x="3" y="428" width="1" height="1" fill="#6f8296"/><rect x="3" y="432" width="1" height="1" fill="#6f8296"/><rect x="3" y="436" width="1" height="1" fill="#6f8296"/><rect x="3" y="440" width="1" height="1" fill="#6f8296"/><rect x="3" y="444" width="1" height="1" fill="#6f8296"/><rect x="3" y="448" width="1" height="1" fill="#6f8296"/><rect x="3" y="452" width="1" height="1" fill="#6f8296"/><rect x="3" y="456" width="1" height="1" fill="#6f8296"/><rect x="3" y="460" width="1" height="1" fill="#6f8296"/><rect x="3" y="464" width="1" height="1" fill="#6f8296"/><rect x="3" y="468" width="1" height="1" fill="#6f8296"/><rect x="3" y="472" width="1" height="1" fill="#6f8296"/><rect x="3" y="476" width="1" height="1" fill="#6f8296"/><rect x="3" y="480" width="1" height="1" fill="#6f8296"/><rect x="3" y="484" width="1" height="1" fill="#6f8296"/><rect x="3" y="488" width="1" height="1" fill="#6f8296"/><rect x="3" y="492" width="1" height="1" fill="#6f8296"/><rect x="3" y="496" width="1" height="1" fill="#6f8296"/><rect x="3" y="500" width="1" height="1" fill="#6f8296"/><rect x="3" y="504" width="1" height="1" fill="#6f8296"/><rect x="3" y="508" width="1" height="1" fill="#6f8296"/><rect x="3" y="512" width="1" height="1" fill="#6f8296"/><rect x="3" y="516" width="1" height="1" fill="#6f8296"/><rect x="3" y="520" width="1" height="1" fill="#6f8296"/><rect x="3" y="524" width="1" height="1" fill="#6f8296"/><rect x="3" y="528" width="1" height="1" fill="#6f8296"/><rect x="3" y="532" width="1" height="1" fill="#6f8296"/><rect x="3" y="536" width="1" height="1" fill="#6f8296"/><rect x="3" y="540" width="1" height="1" fill="#6f8296"/><rect x="3" y="544" width="1" height="1" fill="#6f8296"/></svg>
<div class="a" style="left:319px;top:129px;width:519px;height:548px;border-left:1px solid #7a8a99;border-top:1px solid #7a8a99"></div>
<div class="t" style="left:15.80px;top:143px;letter-spacing:0.822px;">Problem</div>
<div class="t" style="left:15.31px;top:303px;letter-spacing:0.498px;">Calculator</div>
<div class="t" style="left:15.80px;top:401px;letter-spacing:0.716px;">Notepad</div>
<div class="a" style="left:10px;top:161px;width:298px;height:128px;border:1px solid #fff;border-left-color:#828282;border-top-color:#828282;"></div>
<div class="a" style="left:10px;top:161px;width:297px;height:127px;border:1px solid #828282;background:#fff"></div>
<div class="a" style="left:11px;top:162px;width:295px;height:125px;border:1px solid #f4f4f4;"></div>
<div class="t" style="left:12.90px;top:165px;letter-spacing:0.280px;">A</div>
<div class="t" style="left:25.21px;top:165px;letter-spacing:0.790px;">ball</div>
<div class="t" style="left:51.26px;top:165px;letter-spacing:0.421px;">has</div>
<div class="t" style="left:76.21px;top:165px;letter-spacing:0.473px;">been</div>
<div class="t" style="left:108.41px;top:165px;letter-spacing:0.741px;">put</div>
<div class="t" style="left:132.26px;top:165px;letter-spacing:0.810px;">in</div>
<div class="t" style="left:146.95px;top:165px;letter-spacing:0.432px;">this</div>
<div class="t" style="left:173.01px;top:165px;letter-spacing:0.381px;">basket</div>
<div class="t" style="left:217.18px;top:165px;letter-spacing:1.075px;">so</div>
<div class="t" style="left:236.05px;top:165px;letter-spacing:0.364px;">that</div>
<div class="t" style="left:262.96px;top:165px;letter-spacing:1.041px;">it</div>
<div class="t" style="left:275.06px;top:165px;letter-spacing:0.814px;">is</div>
<div class="t" style="left:14.05px;top:182px;letter-spacing:0.413px;">touching</div>
<div class="t" style="left:71.35px;top:182px;letter-spacing:0.579px;">all</div>
<div class="t" style="left:89.63px;top:182px;letter-spacing:0.343px;">edges</div>
<div class="t" style="left:129.34px;top:182px;letter-spacing:0.626px;">without</div>
<div class="t" style="left:179.23px;top:182px;letter-spacing:0.421px;">curving</div>
<div class="t" style="left:228.15px;top:182px;letter-spacing:-0.386px;">any</div>
<div class="t" style="left:252.33px;top:182px;letter-spacing:0.118px;">one</div>
<div class="t" style="left:277.53px;top:182px;letter-spacing:0.117px;">of</div>
<div class="t" style="left:14.05px;top:199px;letter-spacing:0.464px;">them.</div>
<div class="t" style="left:51.30px;top:199px;letter-spacing:0.855px;">Find</div>
<div class="t" style="left:82.25px;top:199px;letter-spacing:0.728px;">the</div>
<div class="t" style="left:104.95px;top:199px;letter-spacing:0.468px;">volume</div>
<div class="t" style="left:152.53px;top:199px;letter-spacing:0.117px;">of</div>
<div class="t" style="left:170.05px;top:199px;letter-spacing:0.528px;">the</div>
<div class="t" style="left:192.11px;top:199px;letter-spacing:0.675px;">ball.</div>
<div class="a" style="left:12px;top:323px;width:292px;height:23px;border:1px solid #7a8a99;background:#fff"></div>
<div class="pbtn" style="left:120px;top:356px"></div>
<div class="pbtn" style="left:217px;top:356px"></div>
<div class="t" style="left:136.60px;top:362px;letter-spacing:0.665px;">Evaluate</div>
<div class="t" style="left:244.01px;top:362px;letter-spacing:0.461px;">Clear</div>
<div class="a" style="left:10px;top:419px;width:298px;height:254px;border-right:1px solid #fff;border-bottom:1px solid #fff"></div>
<div class="a" style="left:10px;top:419px;width:297px;height:253px;border:1px solid #828282;background:#fff"></div>
<div class="a" style="left:13px;top:422px;width:290px;height:246px;border:1px solid #7a8a99;background:#fff"></div>
<div class="a" style="left:320px;top:152px;width:518px;height:525px;background:#c8ddf2;border:1px solid #6382bf"></div>
<div class="a" style="left:321px;top:153px;width:516px;height:1px;background:#fff"></div>
<div class="a" style="left:322px;top:156px;width:512px;height:517px;background:#fff;border:1px solid #7a8a99"></div>
<svg class="a" style="left:322px;top:132px" width="64" height="22" viewBox="0 0 64 22"><path d="M0.5 21.5 L0.5 6.5 L6.5 0.5 L63.5 0.5 L63.5 21.5 Z" fill="#c8ddf2"/><path d="M0.5 20.5 L0.5 6.5 L6.5 0.5 L63.5 0.5 L63.5 20.5" fill="none" stroke="#6382bf"/><path d="M1.5 20 L1.5 7 L7 1.5 L63 1.5" fill="none" stroke="#fff"/><rect x="1" y="21" width="62" height="1" fill="#c8ddf2"/></svg>
<div class="t" style="left:331.90px;top:135px;letter-spacing:0.478px;">Basket</div>
<svg class="a" style="left:0;top:0" width="843" height="682" viewBox="0 0 843 682"><defs><linearGradient id="gTv" x1="0" y1="0" x2="1" y2="0"><stop offset="0" stop-color="#dde8f3"/><stop offset="0.3" stop-color="#ffffff"/><stop offset="0.6" stop-color="#dde8f3"/><stop offset="1" stop-color="#b8cfe5"/></linearGradient><linearGradient id="gTh" x1="0" y1="0" x2="0" y2="1"><stop offset="0" stop-color="#dde8f3"/><stop offset="0.3" stop-color="#ffffff"/><stop offset="0.6" stop-color="#dde8f3"/><stop offset="1" stop-color="#b8cfe5"/></linearGradient></defs><rect x="834" y="157" width="1" height="517" fill="#fff"/><rect x="323" y="673" width="512" height="1" fill="#fff"/><rect x="818" y="157" width="15" height="500" fill="#eeeeee"/><rect x="818" y="157" width="1" height="500" fill="#7a8a99"/><rect x="819" y="157" width="14" height="1" fill="#fff"/><rect x="819" y="157" width="1" height="15" fill="#fff"/><path d="M822 166 L826 162 L830 166 Z" fill="#222"/><rect x="819" y="173" width="14" height="455" fill="url(#gTv)"/><rect x="818" y="172" width="15" height="1" fill="#6382bf"/><rect x="818" y="172" width="1" height="457" fill="#6382bf"/><rect x="818" y="628" width="15" height="1" fill="#6382bf"/><rect x="819" y="173" width="1" height="455" fill="#e9f0f8"/><rect x="823" y="399" width="9" height="1" fill="#fff"/><rect x="822" y="398" width="9" height="1" fill="#6382bf"/><rect x="823" y="401" width="9" height="1" fill="#fff"/><rect x="822" y="400" width="9" height="1" fill="#6382bf"/><rect x="823" y="403" width="9" height="1" fill="#fff"/><rect x="822" y="402" width="9" height="1" fill="#6382bf"/><rect x="819" y="641" width="14" height="1" fill="#7a8a99"/><rect x="819" y="642" width="14" height="1" fill="#fff"/><rect x="819" y="642" width="1" height="15" fill="#fff"/><path d="M822 648 L830 648 L826 652 Z" fill="#222"/><rect x="323" y="657" width="510" height="15" fill="#eeeeee"/><rect x="323" y="657" width="511" height="1" fill="#7a8a99"/><rect x="323" y="658" width="15" height="1" fill="#fff"/><rect x="323" y="658" width="1" height="14" fill="#fff"/><path d="M332 661 L328 665 L332 669 Z" fill="#222"/><rect x="339" y="658" width="445" height="14" fill="url(#gTh)"/><rect x="338" y="657" width="447" height="1" fill="#6382bf"/><rect x="338" y="657" width="1" height="15" fill="#6382bf"/><rect x="784" y="657" width="1" height="15" fill="#6382bf"/><rect x="339" y="658" width="445" height="1" fill="#e9f0f8"/><rect x="560" y="662" width="1" height="9" fill="#fff"/><rect x="559" y="661" width="1" height="9" fill="#6382bf"/><rect x="562" y="662" width="1" height="9" fill="#fff"/><rect x="561" y="661" width="1" height="9" fill="#6382bf"/><rect x="564" y="662" width="1" height="9" fill="#fff"/><rect x="563" y="661" width="1" height="9" fill="#6382bf"/><rect x="802" y="658" width="1" height="14" fill="#7a8a99"/><rect x="803" y="658" width="15" height="1" fill="#fff"/><rect x="803" y="658" width="1" height="14" fill="#fff"/><path d="M809 661 L813 665 L809 669 Z" fill="#222"/><rect x="818" y="657" width="1" height="15" fill="#7a8a99"/></svg>
<svg class="a" style="left:0;top:0" width="843" height="682" viewBox="0 0 843 682"><path d="M491.8 241.2 L685.8 243.8" stroke="#111" stroke-width="1.1" fill="none"/><path d="M685.8 243.8 L728.8 301.9" stroke="#111" stroke-width="1.1" fill="none"/><path d="M728.8 301.9 L562.7 334.8" stroke="#111" stroke-width="1.1" fill="none"/><path d="M562.7 334.8 L417.1 298.0" stroke="#111" stroke-width="1.1" fill="none"/><path d="M417.1 298.0 L491.8 241.2" stroke="#111" stroke-width="1.1" fill="none"/><path d="M417.1 298.0 L582.9 616.6" stroke="#111" stroke-width="1.1" fill="none"/><path d="M562.7 334.8 L582.9 616.6" stroke="#111" stroke-width="1.1" fill="none"/><path d="M728.8 301.9 L582.9 616.6" stroke="#111" stroke-width="1.1" fill="none"/><path d="M582.9 616.6 L491.8 241.2" stroke="#111" stroke-width="1.1" fill="none" stroke-dasharray="12 8"/><path d="M582.9 616.6 L685.8 243.8" stroke="#111" stroke-width="1.1" fill="none" stroke-dasharray="12 8"/><circle cx="491.8" cy="241.2" r="3.2" fill="#ff0000"/><circle cx="685.8" cy="243.8" r="3.2" fill="#ff0000"/><circle cx="728.8" cy="301.9" r="3.2" fill="#ff0000"/><circle cx="562.7" cy="334.8" r="3.2" fill="#ff0000"/><circle cx="417.1" cy="298.0" r="3.2" fill="#ff0000"/><circle cx="582.9" cy="616.6" r="3.2" fill="#ff0000"/></svg></body></html>
